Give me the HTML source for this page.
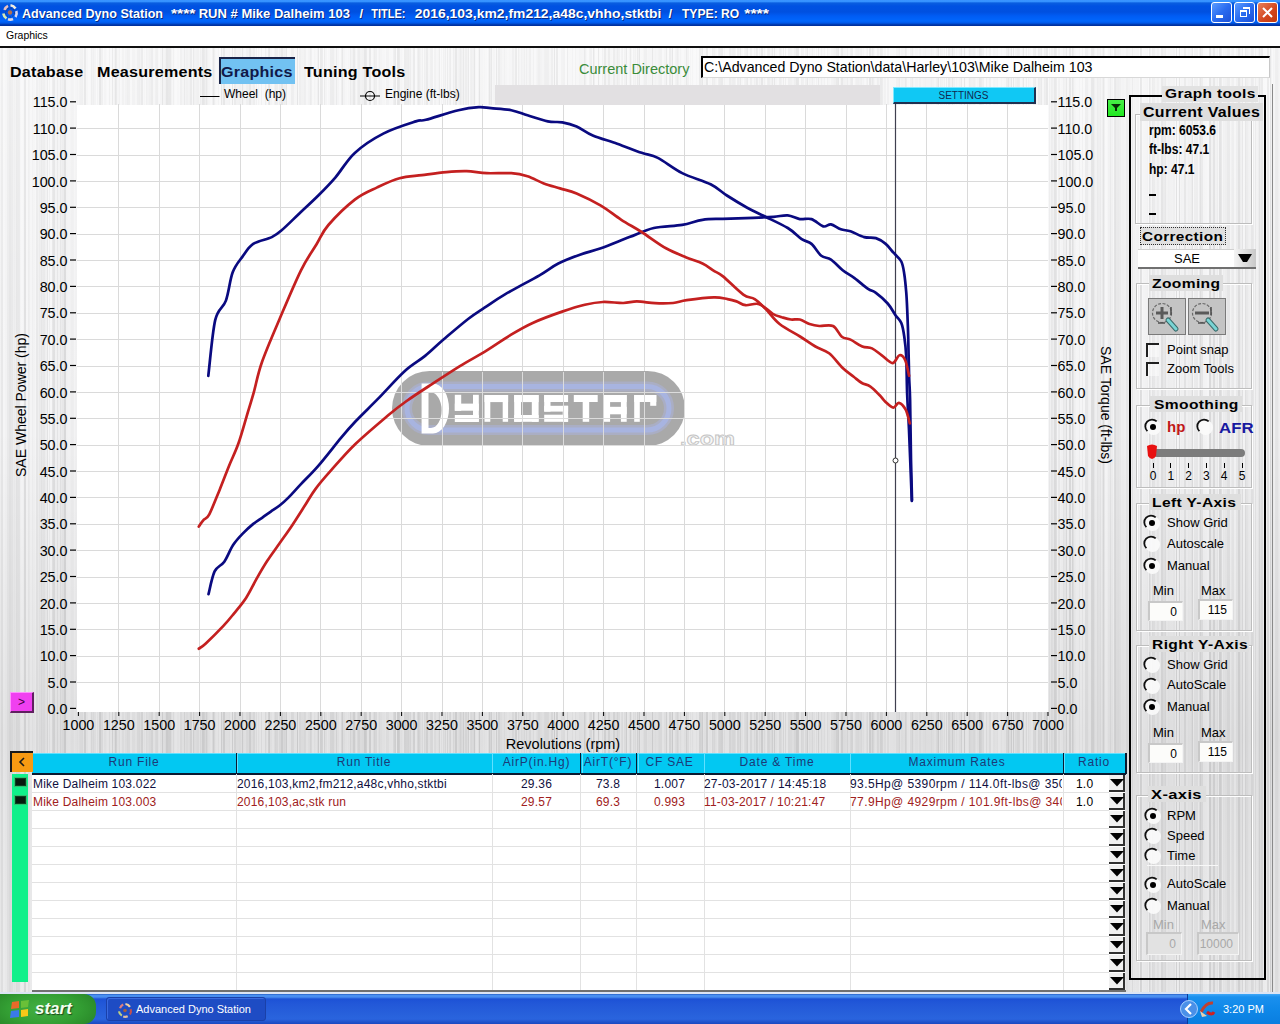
<!DOCTYPE html><html><head><meta charset="utf-8"><style>
*{margin:0;padding:0;box-sizing:border-box}
html,body{width:1280px;height:1024px;overflow:hidden;position:relative;font-family:"Liberation Sans",sans-serif;background:#e6e6e6}
.a{position:absolute;white-space:nowrap}
.metal{background-image:linear-gradient(180deg,rgba(255,255,255,.4) 0,rgba(255,255,255,.25) 120px,rgba(255,255,255,.08) 260px,rgba(0,0,0,0) 380px,rgba(0,0,0,.03) 520px,rgba(0,0,0,.07) 690px,rgba(0,0,0,.06) 760px,rgba(0,0,0,.04) 945px),linear-gradient(90deg,#f1f1f2 0px 1px,#e7e7e8 1px 3px,#f5f5f6 3px 4px,#f5f5f6 4px 5px,#f2f2f3 5px 7px,#eaeaeb 7px 9px,#e4e4e5 9px 11px,#e7e7e8 11px 13px,#eeeeef 13px 14px,#ebebec 14px 15px,#eeeeef 15px 16px,#e4e4e5 16px 17px,#e6e6e7 17px 19px,#e7e7e8 19px 20px,#f3f3f4 20px 21px,#f6f6f7 21px 23px,#f3f3f4 23px 24px,#dfdfe0 24px 26px,#f5f5f6 26px 28px,#ebebec 28px 29px,#eeeeef 29px 30px,#f4f4f5 30px 32px,#eeeeef 32px 33px,#f2f2f3 33px 35px,#f5f5f6 35px 36px,#e8e8e9 36px 38px,#efeff0 38px 39px,#e9e9ea 39px 40px,#ebebec 40px 41px,#e4e4e5 41px 42px,#e9e9ea 42px 43px,#e7e7e8 43px 44px,#e7e7e8 44px 45px,#eeeeef 45px 46px,#f0f0f1 46px 47px,#e3e3e4 47px 48px,#f6f6f7 48px 49px,#ececed 49px 50px,#f6f6f7 50px 52px,#e5e5e6 52px 53px,#dfdfe0 53px 55px,#f0f0f1 55px 56px,#f0f0f1 56px 57px,#e4e4e5 57px 58px,#f0f0f1 58px 60px,#e3e3e4 60px 61px,#ebebec 61px 62px,#e7e7e8 62px 64px,#d8d8d9 64px 66px,#f0f0f1 66px 67px,#f1f1f2 67px 68px,#f2f2f3 68px 70px,#f0f0f1 70px 71px,#ededee 71px 73px,#eeeeef 73px 74px,#f3f3f4 74px 75px,#f0f0f1 75px 77px,#ededee 77px 78px,#f1f1f2 78px 79px,#ececed 79px 80px,#e9e9ea 80px 82px,#e8e8e9 82px 83px,#f1f1f2 83px 84px,#ddddde 84px 86px,#f1f1f2 86px 87px,#f1f1f2 87px 88px,#f6f6f7 88px 90px,#f3f3f4 90px 91px,#e5e5e6 91px 92px,#ececed 92px 93px,#e7e7e8 93px 94px,#ededee 94px 96px,#f6f6f7 96px 97px,#ededee 97px 98px,#f3f3f4 98px 99px,#dbdbdc 99px 100px,#d9d9da 100px 101px,#e8e8e9 101px 103px,#f5f5f6 103px 104px,#efeff0 104px 106px,#f3f3f4 106px 107px,#f6f6f7 107px 108px,#f5f5f6 108px 109px,#e9e9ea 109px 110px,#f4f4f5 110px 112px,#dfdfe0 112px 113px,#f2f2f3 113px 114px,#ececed 114px 115px,#d9d9da 115px 116px,#e0e0e1 116px 117px,#f0f0f1 117px 119px,#eaeaeb 119px 120px,#f5f5f6 120px 121px,#f3f3f4 121px 122px,#ebebec 122px 124px,#f2f2f3 124px 125px,#ececed 125px 127px,#e6e6e7 127px 128px,#e8e8e9 128px 130px,#f4f4f5 130px 132px,#ececed 132px 134px,#ececed 134px 135px,#f1f1f2 135px 137px,#e7e7e8 137px 139px,#e5e5e6 139px 140px,#ececed 140px 141px,#e0e0e1 141px 143px,#f3f3f4 143px 144px,#f0f0f1 144px 145px,#f4f4f5 145px 146px,#e9e9ea 146px 147px,#ededee 147px 149px,#e9e9ea 149px 151px,#e2e2e3 151px 153px,#f1f1f2 153px 154px,#f2f2f3 154px 155px,#e9e9ea 155px 156px,#e6e6e7 156px 158px,#f2f2f3 158px 159px,#f5f5f6 159px 160px,#efeff0 160px 162px,#d9d9da 162px 163px,#ededee 163px 165px,#e9e9ea 165px 166px,#d9d9da 166px 168px,#ddddde 168px 170px,#ddddde 170px 171px,#ebebec 171px 172px,#f2f2f3 172px 173px,#e8e8e9 173px 174px,#f3f3f4 174px 175px,#f6f6f7 175px 177px,#f2f2f3 177px 179px,#f5f5f6 179px 180px,#e8e8e9 180px 182px,#efeff0 182px 184px,#e0e0e1 184px 185px,#ededee 185px 186px,#e9e9ea 186px 188px,#ededee 188px 189px,#ebebec 189px 190px,#e0e0e1 190px 192px,#f2f2f3 192px 193px,#ddddde 193px 194px,#eaeaeb 194px 195px,#ececed 195px 196px,#eaeaeb 196px 197px,#e8e8e9 197px 199px,#f1f1f2 199px 200px,#e6e6e7 200px 201px,#ececed 201px 202px,#dadadb 202px 204px,#dfdfe0 204px 205px,#e7e7e8 205px 206px,#ddddde 206px 207px,#e8e8e9 207px 208px,#efeff0 208px 209px,#f0f0f1 209px 210px,#f3f3f4 210px 211px,#f5f5f6 211px 212px,#e9e9ea 212px 213px,#dadadb 213px 214px,#e6e6e7 214px 215px,#f1f1f2 215px 216px,#f4f4f5 216px 218px,#ededee 218px 219px,#f6f6f7 219px 221px,#dbdbdc 221px 222px,#ededee 222px 223px,#dbdbdc 223px 225px,#efeff0 225px 227px,#efeff0 227px 229px,#ececed 229px 230px,#f4f4f5 230px 232px,#dbdbdc 232px 233px,#f3f3f4 233px 234px,#e1e1e2 234px 236px,#ebebec 236px 237px,#ebebec 237px 239px,#e9e9ea 239px 241px,#eeeeef 241px 242px,#d9d9da 242px 243px,#ededee 243px 244px,#f0f0f1 244px 246px,#e8e8e9 246px 247px,#e7e7e8 247px 248px,#e9e9ea 248px 249px,#dbdbdc 249px 251px,#ececed 251px 253px,#e5e5e6 253px 255px,#f2f2f3 255px 256px,#eaeaeb 256px 257px,#f6f6f7 257px 258px,#eeeeef 258px 259px,#f4f4f5 259px 260px,#f6f6f7 260px 261px,#e9e9ea 261px 262px,#f6f6f7 262px 263px,#f5f5f6 263px 265px,#e6e6e7 265px 266px,#f0f0f1 266px 267px,#f4f4f5 267px 268px,#dededf 268px 269px,#d9d9da 269px 270px,#efeff0 270px 272px,#f4f4f5 272px 274px,#ebebec 274px 275px,#e3e3e4 275px 276px,#e6e6e7 276px 278px,#f1f1f2 278px 279px,#e7e7e8 279px 281px,#dadadb 281px 283px,#e8e8e9 283px 284px,#e5e5e6 284px 285px,#e7e7e8 285px 286px,#dadadb 286px 287px,#f5f5f6 287px 289px,#f3f3f4 289px 291px,#e6e6e7 291px 292px,#e6e6e7 292px 293px,#e7e7e8 293px 294px,#f1f1f2 294px 296px,#f2f2f3 296px 297px,#d8d8d9 297px 298px,#f4f4f5 298px 299px,#e6e6e7 299px 301px,#ebebec 301px 302px,#ebebec 302px 304px,#e6e6e7 304px 305px,#e7e7e8 305px 306px,#f2f2f3 306px 308px,#ededee 308px 309px,#ececed 309px 310px,#e2e2e3 310px 311px,#e7e7e8 311px 312px,#f4f4f5 312px 314px,#eeeeef 314px 315px,#f1f1f2 315px 316px,#f3f3f4 316px 317px,#eaeaeb 317px 318px,#d8d8d9 318px 319px,#f5f5f6 319px 320px,#dededf 320px 321px,#dededf 321px 322px,#e2e2e3 322px 323px,#f6f6f7 323px 324px,#e1e1e2 324px 325px,#efeff0 325px 327px,#f6f6f7 327px 328px,#f2f2f3 328px 329px,#f2f2f3 329px 330px,#e4e4e5 330px 332px,#e3e3e4 332px 334px,#ededee 334px 335px,#f0f0f1 335px 336px,#e0e0e1 336px 337px,#efeff0 337px 339px,#f5f5f6 339px 341px,#e6e6e7 341px 342px,#dadadb 342px 343px,#ededee 343px 345px,#f2f2f3 345px 347px,#f4f4f5 347px 348px,#f0f0f1 348px 349px,#f2f2f3 349px 350px,#e2e2e3 350px 351px,#ececed 351px 352px,#eaeaeb 352px 353px,#dcdcdd 353px 355px,#ececed 355px 356px,#f3f3f4 356px 357px,#e8e8e9 357px 358px,#e2e2e3 358px 360px,#ebebec 360px 362px,#e9e9ea 362px 364px,#d8d8d9 364px 366px,#dededf 366px 367px,#f2f2f3 367px 368px,#f2f2f3 368px 369px,#dbdbdc 369px 371px,#f3f3f4 371px 373px,#ebebec 373px 374px,#e1e1e2 374px 375px,#e6e6e7 375px 377px,#f4f4f5 377px 378px,#efeff0 378px 379px,#e8e8e9 379px 380px,#ededee 380px 382px,#f1f1f2 382px 383px,#f1f1f2 383px 385px,#f4f4f5 385px 386px,#ebebec 386px 387px,#ececed 387px 389px,#f3f3f4 389px 391px,#f3f3f4 391px 392px,#f4f4f5 392px 393px,#e7e7e8 393px 394px,#e1e1e2 394px 395px,#ddddde 395px 396px,#f6f6f7 396px 397px,#d9d9da 397px 399px,#dededf 399px 400px,#f1f1f2 400px 401px,#efeff0 401px 402px,#f3f3f4 402px 403px,#f5f5f6 403px 404px,#e1e1e2 404px 406px,#e3e3e4 406px 408px,#e1e1e2 408px 409px,#e8e8e9 409px 410px,#e3e3e4 410px 411px,#f1f1f2 411px 412px,#f1f1f2 412px 413px,#dfdfe0 413px 415px,#f6f6f7 415px 417px,#e7e7e8 417px 418px,#dededf 418px 419px,#e3e3e4 419px 420px,#ebebec 420px 421px,#f0f0f1 421px 422px,#e9e9ea 422px 423px,#f5f5f6 423px 424px,#e7e7e8 424px 425px,#ebebec 425px 426px,#dfdfe0 426px 428px,#f0f0f1 428px 430px,#e8e8e9 430px 431px,#e6e6e7 431px 432px,#e7e7e8 432px 433px,#f6f6f7 433px 434px,#ebebec 434px 435px,#eaeaeb 435px 436px,#f1f1f2 436px 438px,#eeeeef 438px 439px,#e1e1e2 439px 440px,#f6f6f7 440px 441px,#ededee 441px 442px,#f5f5f6 442px 443px,#e9e9ea 443px 444px,#eeeeef 444px 445px,#e5e5e6 445px 446px,#f4f4f5 446px 447px,#e1e1e2 447px 448px,#f2f2f3 448px 449px,#e7e7e8 449px 450px,#e2e2e3 450px 451px,#f3f3f4 451px 453px,#e5e5e6 453px 454px,#ececed 454px 455px,#dadadb 455px 457px,#efeff0 457px 458px,#ececed 458px 459px,#e8e8e9 459px 460px,#e0e0e1 460px 461px,#e7e7e8 461px 462px,#ebebec 462px 463px,#dcdcdd 463px 464px,#eeeeef 464px 465px,#e4e4e5 465px 467px,#ebebec 467px 468px,#dededf 468px 469px,#f6f6f7 469px 470px,#e9e9ea 470px 471px,#e6e6e7 471px 472px,#eaeaeb 472px 473px,#e8e8e9 473px 474px,#d8d8d9 474px 475px,#f1f1f2 475px 476px,#f6f6f7 476px 478px,#eeeeef 478px 479px,#d8d8d9 479px 480px,#efeff0 480px 482px,#efeff0 482px 483px,#f2f2f3 483px 484px,#f0f0f1 484px 485px,#f3f3f4 485px 487px,#f6f6f7 487px 488px,#ececed 488px 489px,#d9d9da 489px 490px,#e5e5e6 490px 491px,#dbdbdc 491px 492px,#f2f2f3 492px 493px,#eeeeef 493px 495px,#f4f4f5 495px 496px,#dcdcdd 496px 497px,#f1f1f2 497px 498px,#e2e2e3 498px 500px,#ebebec 500px 502px,#f0f0f1 502px 504px,#e9e9ea 504px 505px,#f0f0f1 505px 507px,#f3f3f4 507px 509px,#f0f0f1 509px 510px,#f1f1f2 510px 512px,#e7e7e8 512px 514px,#efeff0 514px 515px,#dfdfe0 515px 516px,#dededf 516px 517px,#f5f5f6 517px 518px,#e5e5e6 518px 519px,#eeeeef 519px 520px,#f1f1f2 520px 521px,#e9e9ea 521px 522px,#ededee 522px 524px,#e6e6e7 524px 525px,#f0f0f1 525px 526px,#e6e6e7 526px 527px,#efeff0 527px 529px,#e6e6e7 529px 531px,#f2f2f3 531px 533px,#e9e9ea 533px 534px,#f4f4f5 534px 536px,#efeff0 536px 537px,#ebebec 537px 538px,#e6e6e7 538px 540px,#ebebec 540px 541px,#ececed 541px 542px,#efeff0 542px 544px,#e8e8e9 544px 545px,#e6e6e7 545px 546px,#e6e6e7 546px 548px,#e7e7e8 548px 549px,#f0f0f1 549px 551px,#e5e5e6 551px 553px,#f2f2f3 553px 554px,#d9d9da 554px 555px,#f4f4f5 555px 556px,#dfdfe0 556px 558px,#f5f5f6 558px 559px,#f4f4f5 559px 561px,#ececed 561px 563px,#eaeaeb 563px 565px,#f6f6f7 565px 567px,#e2e2e3 567px 568px,#f3f3f4 568px 570px,#f3f3f4 570px 572px,#ececed 572px 573px,#f4f4f5 573px 574px,#f5f5f6 574px 575px,#ebebec 575px 576px,#f2f2f3 576px 577px,#f2f2f3 577px 579px,#ededee 579px 580px,#eeeeef 580px 581px,#eeeeef 581px 582px,#efeff0 582px 584px,#ddddde 584px 585px,#e7e7e8 585px 586px,#f1f1f2 586px 587px,#f6f6f7 587px 589px,#ebebec 589px 590px,#e7e7e8 590px 592px,#f4f4f5 592px 593px,#d8d8d9 593px 594px,#e8e8e9 594px 595px,#f6f6f7 595px 597px,#f5f5f6 597px 598px,#dbdbdc 598px 599px,#f3f3f4 599px 600px,#f6f6f7 600px 602px,#eaeaeb 602px 603px,#f1f1f2 603px 604px,#dededf 604px 606px,#f0f0f1 606px 608px,#e1e1e2 608px 610px,#f0f0f1 610px 612px,#f2f2f3 612px 613px,#e1e1e2 613px 615px,#ededee 615px 616px,#ebebec 616px 617px,#e1e1e2 617px 618px,#e9e9ea 618px 620px,#f5f5f6 620px 621px,#ececed 621px 622px,#e9e9ea 622px 623px,#f5f5f6 623px 624px,#ebebec 624px 626px,#dbdbdc 626px 627px,#f6f6f7 627px 628px,#f5f5f6 628px 629px,#eeeeef 629px 630px,#dededf 630px 631px,#eeeeef 631px 632px,#f6f6f7 632px 633px,#eaeaeb 633px 634px,#eeeeef 634px 635px,#e9e9ea 635px 636px,#f3f3f4 636px 637px,#dfdfe0 637px 638px,#eaeaeb 638px 639px,#d9d9da 639px 640px,#f4f4f5 640px 641px,#f3f3f4 641px 643px,#eeeeef 643px 644px,#e7e7e8 644px 646px,#e6e6e7 646px 647px,#f1f1f2 647px 648px,#efeff0 648px 650px,#efeff0 650px 652px,#d9d9da 652px 653px,#efeff0 653px 655px,#ececed 655px 656px,#efeff0 656px 658px,#ebebec 658px 659px,#e8e8e9 659px 660px,#e8e8e9 660px 662px,#f4f4f5 662px 664px,#ededee 664px 666px,#ddddde 666px 667px,#f3f3f4 667px 668px,#f6f6f7 668px 669px,#e2e2e3 669px 671px,#ececed 671px 672px,#d8d8d9 672px 673px,#f5f5f6 673px 674px,#f4f4f5 674px 675px,#ececed 675px 676px,#e9e9ea 676px 677px,#e2e2e3 677px 678px,#e9e9ea 678px 679px,#f2f2f3 679px 680px,#ececed 680px 681px,#f2f2f3 681px 682px,#f4f4f5 682px 684px,#efeff0 684px 686px,#ddddde 686px 687px,#eaeaeb 687px 689px,#f6f6f7 689px 690px,#efeff0 690px 691px,#f5f5f6 691px 692px,#efeff0 692px 693px,#f5f5f6 693px 694px,#f6f6f7 694px 696px,#f1f1f2 696px 697px,#f5f5f6 697px 699px,#e1e1e2 699px 700px,#e1e1e2 700px 701px,#e4e4e5 701px 702px,#dbdbdc 702px 703px,#f2f2f3 703px 704px,#efeff0 704px 706px,#dcdcdd 706px 708px,#f6f6f7 708px 709px,#f3f3f4 709px 711px,#f5f5f6 711px 712px,#e5e5e6 712px 713px,#e9e9ea 713px 714px,#e6e6e7 714px 715px,#eeeeef 715px 716px,#f1f1f2 716px 717px,#f5f5f6 717px 718px,#e7e7e8 718px 719px,#e2e2e3 719px 721px,#dfdfe0 721px 723px,#f2f2f3 723px 724px,#ebebec 724px 725px,#f3f3f4 725px 727px,#f3f3f4 727px 729px,#e3e3e4 729px 730px,#e3e3e4 730px 731px,#eaeaeb 731px 732px,#e6e6e7 732px 733px,#e5e5e6 733px 735px,#ebebec 735px 736px,#f6f6f7 736px 737px,#e5e5e6 737px 739px,#ebebec 739px 740px,#dededf 740px 741px,#f1f1f2 741px 743px,#f6f6f7 743px 744px,#ececed 744px 745px,#e9e9ea 745px 746px,#e5e5e6 746px 747px,#dededf 747px 748px,#f4f4f5 748px 750px,#e6e6e7 750px 752px,#f2f2f3 752px 754px,#e8e8e9 754px 755px,#ededee 755px 756px,#dfdfe0 756px 757px,#e2e2e3 757px 758px,#f2f2f3 758px 759px,#e8e8e9 759px 760px,#eeeeef 760px 761px,#dadadb 761px 763px,#f1f1f2 763px 764px,#e9e9ea 764px 765px,#f2f2f3 765px 766px,#f6f6f7 766px 767px,#e6e6e7 767px 768px,#e3e3e4 768px 769px,#e5e5e6 769px 770px,#ededee 770px 771px,#e9e9ea 771px 772px,#ddddde 772px 773px,#f0f0f1 773px 774px,#dbdbdc 774px 775px,#f0f0f1 775px 777px,#f4f4f5 777px 779px,#e6e6e7 779px 781px,#ebebec 781px 782px,#f3f3f4 782px 783px,#e4e4e5 783px 784px,#f5f5f6 784px 785px,#e6e6e7 785px 786px,#f5f5f6 786px 788px,#e8e8e9 788px 790px,#e9e9ea 790px 792px,#eeeeef 792px 794px,#e6e6e7 794px 795px,#e6e6e7 795px 796px,#d9d9da 796px 798px,#dbdbdc 798px 799px,#f5f5f6 799px 801px,#e6e6e7 801px 802px,#e9e9ea 802px 804px,#f4f4f5 804px 805px,#e9e9ea 805px 807px,#dadadb 807px 808px,#f4f4f5 808px 809px,#ececed 809px 810px,#efeff0 810px 811px,#eeeeef 811px 812px,#e6e6e7 812px 813px,#f0f0f1 813px 814px,#eeeeef 814px 815px,#f5f5f6 815px 816px,#ebebec 816px 817px,#f3f3f4 817px 818px,#dfdfe0 818px 819px,#f2f2f3 819px 821px,#e8e8e9 821px 822px,#f1f1f2 822px 824px,#ebebec 824px 825px,#f4f4f5 825px 826px,#f6f6f7 826px 827px,#e9e9ea 827px 828px,#f1f1f2 828px 830px,#f4f4f5 830px 831px,#ededee 831px 833px,#ebebec 833px 834px,#e8e8e9 834px 836px,#dededf 836px 838px,#dadadb 838px 839px,#f4f4f5 839px 840px,#eeeeef 840px 841px,#dcdcdd 841px 843px,#ebebec 843px 845px,#ececed 845px 846px,#ededee 846px 847px,#e3e3e4 847px 848px,#f0f0f1 848px 850px,#e7e7e8 850px 851px,#e2e2e3 851px 853px,#f5f5f6 853px 854px,#f3f3f4 854px 855px,#ececed 855px 856px,#e8e8e9 856px 858px,#e7e7e8 858px 859px,#ebebec 859px 860px,#eaeaeb 860px 861px,#e7e7e8 861px 862px,#f0f0f1 862px 863px,#ededee 863px 864px,#f3f3f4 864px 865px,#f4f4f5 865px 866px,#ededee 866px 867px,#e6e6e7 867px 868px,#f5f5f6 868px 869px,#dadadb 869px 871px,#e9e9ea 871px 872px,#ddddde 872px 873px,#e5e5e6 873px 874px,#eeeeef 874px 875px,#f3f3f4 875px 876px,#f1f1f2 876px 877px,#e5e5e6 877px 878px,#e6e6e7 878px 879px,#eeeeef 879px 880px,#dfdfe0 880px 882px,#e3e3e4 882px 883px,#f1f1f2 883px 884px,#ebebec 884px 886px,#f5f5f6 886px 887px,#eaeaeb 887px 889px,#f4f4f5 889px 890px,#f2f2f3 890px 891px,#f2f2f3 891px 893px,#f1f1f2 893px 895px,#f2f2f3 895px 896px,#e9e9ea 896px 898px,#e8e8e9 898px 899px,#e2e2e3 899px 900px,#f2f2f3 900px 901px,#ececed 901px 903px,#eeeeef 903px 905px,#dfdfe0 905px 906px,#e6e6e7 906px 907px,#f4f4f5 907px 909px,#f6f6f7 909px 910px,#e9e9ea 910px 912px,#e1e1e2 912px 913px,#eeeeef 913px 914px,#f1f1f2 914px 915px,#ededee 915px 917px,#ededee 917px 918px,#f1f1f2 918px 919px,#eaeaeb 919px 920px,#e9e9ea 920px 921px,#efeff0 921px 923px,#ececed 923px 924px,#ececed 924px 925px,#e9e9ea 925px 926px,#ededee 926px 927px,#ededee 927px 929px,#ededee 929px 931px,#e8e8e9 931px 932px,#ededee 932px 934px,#f1f1f2 934px 936px,#e9e9ea 936px 937px,#e4e4e5 937px 938px,#d8d8d9 938px 939px,#f3f3f4 939px 940px,#e8e8e9 940px 941px,#ececed 941px 943px,#f1f1f2 943px 944px,#eaeaeb 944px 945px,#f5f5f6 945px 946px,#e4e4e5 946px 947px,#f4f4f5 947px 948px,#e1e1e2 948px 950px,#ebebec 950px 951px,#ececed 951px 952px,#dbdbdc 952px 953px,#ebebec 953px 954px,#e9e9ea 954px 955px,#f3f3f4 955px 956px,#ededee 956px 957px,#f2f2f3 957px 959px,#ececed 959px 961px,#dfdfe0 961px 962px,#f4f4f5 962px 964px,#d8d8d9 964px 965px,#f3f3f4 965px 966px,#f5f5f6 966px 968px,#f1f1f2 968px 969px,#e2e2e3 969px 970px,#e7e7e8 970px 971px,#e9e9ea 971px 972px,#eaeaeb 972px 973px,#e7e7e8 973px 974px,#e6e6e7 974px 975px,#ededee 975px 976px,#f3f3f4 976px 977px,#eeeeef 977px 979px,#dcdcdd 979px 980px,#dededf 980px 981px,#e2e2e3 981px 982px,#e9e9ea 982px 983px,#e8e8e9 983px 984px,#f6f6f7 984px 986px,#e8e8e9 986px 987px,#f3f3f4 987px 989px,#e9e9ea 989px 991px,#f6f6f7 991px 993px,#efeff0 993px 995px,#f1f1f2 995px 997px,#eeeeef 997px 998px,#f6f6f7 998px 1000px,#f4f4f5 1000px 1001px,#efeff0 1001px 1002px,#f4f4f5 1002px 1004px,#f2f2f3 1004px 1006px,#e4e4e5 1006px 1008px,#dadadb 1008px 1009px,#ebebec 1009px 1011px,#dadadb 1011px 1012px,#f4f4f5 1012px 1013px,#dbdbdc 1013px 1014px,#f2f2f3 1014px 1015px,#e9e9ea 1015px 1017px,#e4e4e5 1017px 1019px,#e6e6e7 1019px 1020px,#f4f4f5 1020px 1022px,#ededee 1022px 1023px,#dcdcdd 1023px 1024px,#f5f5f6 1024px 1025px,#f2f2f3 1025px 1026px,#e6e6e7 1026px 1027px,#f6f6f7 1027px 1028px,#ebebec 1028px 1029px,#f1f1f2 1029px 1031px,#f5f5f6 1031px 1033px,#e6e6e7 1033px 1035px,#e3e3e4 1035px 1036px,#f2f2f3 1036px 1038px,#e2e2e3 1038px 1039px,#e4e4e5 1039px 1040px,#e6e6e7 1040px 1041px,#dfdfe0 1041px 1042px,#f2f2f3 1042px 1044px,#e4e4e5 1044px 1045px,#e6e6e7 1045px 1046px,#dcdcdd 1046px 1048px,#f6f6f7 1048px 1049px,#e9e9ea 1049px 1050px,#f0f0f1 1050px 1051px,#e6e6e7 1051px 1052px,#e8e8e9 1052px 1053px,#ededee 1053px 1054px,#ddddde 1054px 1055px,#ddddde 1055px 1056px,#e3e3e4 1056px 1057px,#f5f5f6 1057px 1058px,#ebebec 1058px 1059px,#eaeaeb 1059px 1060px,#f4f4f5 1060px 1061px,#f2f2f3 1061px 1063px,#e8e8e9 1063px 1064px,#ececed 1064px 1066px,#ddddde 1066px 1067px,#f2f2f3 1067px 1069px,#dbdbdc 1069px 1071px,#f0f0f1 1071px 1072px,#dadadb 1072px 1073px,#e4e4e5 1073px 1074px,#efeff0 1074px 1075px,#f1f1f2 1075px 1076px,#f4f4f5 1076px 1077px,#f4f4f5 1077px 1079px,#eeeeef 1079px 1080px,#f5f5f6 1080px 1082px,#ececed 1082px 1083px,#f5f5f6 1083px 1085px,#e7e7e8 1085px 1086px,#e7e7e8 1086px 1088px,#f0f0f1 1088px 1089px,#f2f2f3 1089px 1090px,#f1f1f2 1090px 1091px,#ddddde 1091px 1092px,#dcdcdd 1092px 1094px,#e8e8e9 1094px 1095px,#efeff0 1095px 1097px,#e5e5e6 1097px 1098px,#e9e9ea 1098px 1099px,#eaeaeb 1099px 1100px,#e6e6e7 1100px 1101px,#f0f0f1 1101px 1102px,#e8e8e9 1102px 1103px,#dbdbdc 1103px 1104px,#eaeaeb 1104px 1105px,#f6f6f7 1105px 1107px,#f3f3f4 1107px 1108px,#ededee 1108px 1110px,#e4e4e5 1110px 1111px,#eeeeef 1111px 1113px,#f4f4f5 1113px 1114px,#dfdfe0 1114px 1115px,#dcdcdd 1115px 1116px,#e6e6e7 1116px 1118px,#e5e5e6 1118px 1119px,#e8e8e9 1119px 1121px,#eeeeef 1121px 1122px,#ededee 1122px 1124px,#efeff0 1124px 1126px,#e6e6e7 1126px 1128px,#ebebec 1128px 1130px,#efeff0 1130px 1131px,#f0f0f1 1131px 1132px,#e3e3e4 1132px 1133px,#f0f0f1 1133px 1134px,#eeeeef 1134px 1135px,#f0f0f1 1135px 1136px,#efeff0 1136px 1137px,#eeeeef 1137px 1138px,#eeeeef 1138px 1139px,#f6f6f7 1139px 1140px,#dcdcdd 1140px 1141px,#dededf 1141px 1142px,#f5f5f6 1142px 1143px,#f2f2f3 1143px 1145px,#f1f1f2 1145px 1147px,#eeeeef 1147px 1148px,#f6f6f7 1148px 1149px,#ddddde 1149px 1150px,#e8e8e9 1150px 1151px,#f2f2f3 1151px 1152px,#e3e3e4 1152px 1153px,#e6e6e7 1153px 1155px,#efeff0 1155px 1157px,#e9e9ea 1157px 1158px,#eaeaeb 1158px 1159px,#f1f1f2 1159px 1161px,#dededf 1161px 1163px,#e6e6e7 1163px 1165px,#e1e1e2 1165px 1166px,#efeff0 1166px 1168px,#ececed 1168px 1169px,#ededee 1169px 1170px,#eeeeef 1170px 1172px,#efeff0 1172px 1173px,#ececed 1173px 1175px,#f4f4f5 1175px 1176px,#dadadb 1176px 1177px,#f6f6f7 1177px 1178px,#f4f4f5 1178px 1179px,#d9d9da 1179px 1180px,#f2f2f3 1180px 1181px,#efeff0 1181px 1182px,#f0f0f1 1182px 1183px,#f0f0f1 1183px 1184px,#e1e1e2 1184px 1185px,#e1e1e2 1185px 1186px,#f0f0f1 1186px 1188px,#ececed 1188px 1189px,#ededee 1189px 1191px,#e8e8e9 1191px 1192px,#dcdcdd 1192px 1193px,#f5f5f6 1193px 1194px,#eaeaeb 1194px 1196px,#e9e9ea 1196px 1198px,#f4f4f5 1198px 1199px,#e8e8e9 1199px 1200px,#dadadb 1200px 1201px,#e4e4e5 1201px 1203px,#f2f2f3 1203px 1205px,#f3f3f4 1205px 1207px,#f5f5f6 1207px 1208px,#f5f5f6 1208px 1209px,#d9d9da 1209px 1210px,#d8d8d9 1210px 1211px,#ededee 1211px 1213px,#dbdbdc 1213px 1215px,#eeeeef 1215px 1217px,#e8e8e9 1217px 1218px,#f4f4f5 1218px 1219px,#dadadb 1219px 1221px,#e1e1e2 1221px 1222px,#f3f3f4 1222px 1223px,#ebebec 1223px 1224px,#ededee 1224px 1225px,#eaeaeb 1225px 1227px,#e3e3e4 1227px 1229px,#e3e3e4 1229px 1230px,#f2f2f3 1230px 1231px,#ececed 1231px 1232px,#e8e8e9 1232px 1234px,#f3f3f4 1234px 1236px,#e9e9ea 1236px 1238px,#d9d9da 1238px 1240px,#e9e9ea 1240px 1241px,#ececed 1241px 1242px,#dfdfe0 1242px 1243px,#f3f3f4 1243px 1245px,#dededf 1245px 1246px,#e6e6e7 1246px 1247px,#e7e7e8 1247px 1248px,#ececed 1248px 1249px,#eeeeef 1249px 1251px,#e2e2e3 1251px 1253px,#e5e5e6 1253px 1254px,#f2f2f3 1254px 1255px,#e4e4e5 1255px 1256px,#efeff0 1256px 1258px,#e9e9ea 1258px 1259px,#dbdbdc 1259px 1260px,#e7e7e8 1260px 1261px,#e0e0e1 1261px 1263px,#f5f5f6 1263px 1265px,#f6f6f7 1265px 1267px,#e1e1e2 1267px 1269px,#f6f6f7 1269px 1270px,#d8d8d9 1270px 1271px,#ececed 1271px 1272px,#f5f5f6 1272px 1273px,#eeeeef 1273px 1274px,#f1f1f2 1274px 1275px,#e6e6e7 1275px 1276px,#e5e5e6 1276px 1278px,#ebebec 1278px 1279px,#efeff0 1279px 1280px)}
.b{font-weight:bold}
</style></head><body><div class="a" style="left:0;top:0;width:1280px;height:26px;background:linear-gradient(#3a94ff 0,#3592ff 1.5px,#0a5ee0 3px,#0052e2 6px,#0050e0 12px,#005cf4 16px,#0066fc 21px,#0058e8 23px,#0032a0 25px,#0030a0 26px)"></div>
<svg class="a" style="left:0px;top:2px" width="20" height="20" viewBox="0 0 20 20"><g fill="none" stroke-width="2.6"><path d="M4.5,8 A7,7 0 0 1 8,3.8" stroke="#e8c0c0"/><path d="M10.5,3.3 A7,7 0 0 1 15.5,6.5" stroke="#f0ece0"/><path d="M16.3,9 A7,7 0 0 1 15.5,15" stroke="#d8d8f0"/><path d="M13,17 A7,7 0 0 1 8,17.3" stroke="#e0d8e0"/><path d="M6.5,16.3 A7,7 0 0 1 3.3,11.5" stroke="#d8e8b0"/></g><circle cx="10" cy="10.5" r="2.2" fill="#b07050"/><circle cx="10" cy="10.5" r="4.5" fill="none" stroke="#1a3a80" stroke-width="1" stroke-dasharray="1.5 1.5"/></svg>
<svg class="a" style="left:0;top:0" width="800" height="26"><text x="23" y="19" font-family="Liberation Sans" font-weight="bold" font-size="13" fill="#0a2a80" textLength="141.0" lengthAdjust="spacingAndGlyphs">Advanced Dyno Station</text><text x="22" y="18" font-family="Liberation Sans" font-weight="bold" font-size="13" fill="#fff" textLength="141.0" lengthAdjust="spacingAndGlyphs">Advanced Dyno Station</text><text x="172" y="19" font-family="Liberation Sans" font-weight="bold" font-size="13" fill="#0a2a80" textLength="24.5" lengthAdjust="spacingAndGlyphs">****</text><text x="171" y="18" font-family="Liberation Sans" font-weight="bold" font-size="13" fill="#fff" textLength="24.5" lengthAdjust="spacingAndGlyphs">****</text><text x="199.7" y="19" font-family="Liberation Sans" font-weight="bold" font-size="13" fill="#0a2a80" textLength="151.3" lengthAdjust="spacingAndGlyphs">RUN # Mike Dalheim 103</text><text x="198.7" y="18" font-family="Liberation Sans" font-weight="bold" font-size="13" fill="#fff" textLength="151.3" lengthAdjust="spacingAndGlyphs">RUN # Mike Dalheim 103</text><text x="360.6" y="19" font-family="Liberation Sans" font-weight="bold" font-size="13" fill="#0a2a80">/</text><text x="359.6" y="18" font-family="Liberation Sans" font-weight="bold" font-size="13" fill="#fff">/</text><text x="372.3" y="19" font-family="Liberation Sans" font-weight="bold" font-size="13" fill="#0a2a80" textLength="34.2" lengthAdjust="spacingAndGlyphs">TITLE:</text><text x="371.3" y="18" font-family="Liberation Sans" font-weight="bold" font-size="13" fill="#fff" textLength="34.2" lengthAdjust="spacingAndGlyphs">TITLE:</text><text x="415.8" y="19" font-family="Liberation Sans" font-weight="bold" font-size="13" fill="#0a2a80" textLength="246.7" lengthAdjust="spacingAndGlyphs">2016,103,km2,fm212,a48c,vhho,stktbi</text><text x="414.8" y="18" font-family="Liberation Sans" font-weight="bold" font-size="13" fill="#fff" textLength="246.7" lengthAdjust="spacingAndGlyphs">2016,103,km2,fm212,a48c,vhho,stktbi</text><text x="669.5" y="19" font-family="Liberation Sans" font-weight="bold" font-size="13" fill="#0a2a80">/</text><text x="668.5" y="18" font-family="Liberation Sans" font-weight="bold" font-size="13" fill="#fff">/</text><text x="682.9" y="19" font-family="Liberation Sans" font-weight="bold" font-size="13" fill="#0a2a80" textLength="57.4" lengthAdjust="spacingAndGlyphs">TYPE: RO</text><text x="681.9" y="18" font-family="Liberation Sans" font-weight="bold" font-size="13" fill="#fff" textLength="57.4" lengthAdjust="spacingAndGlyphs">TYPE: RO</text><text x="745.2" y="19" font-family="Liberation Sans" font-weight="bold" font-size="13" fill="#0a2a80" textLength="24.8" lengthAdjust="spacingAndGlyphs">****</text><text x="744.2" y="18" font-family="Liberation Sans" font-weight="bold" font-size="13" fill="#fff" textLength="24.8" lengthAdjust="spacingAndGlyphs">****</text></svg>
<div class="a" style="left:1211px;top:2px;width:21px;height:21px;border:1px solid #fff;border-radius:3px;background:linear-gradient(135deg,#5c9cff,#2a6cf0 50%,#1c50d8)"></div>
<div class="a" style="left:1234px;top:2px;width:21px;height:21px;border:1px solid #fff;border-radius:3px;background:linear-gradient(135deg,#5c9cff,#2a6cf0 50%,#1c50d8)"></div>
<div class="a" style="left:1257px;top:2px;width:21px;height:21px;border:1px solid #fff;border-radius:3px;background:linear-gradient(135deg,#e8805a,#d2451c 60%,#c03a10)"></div>
<div class="a" style="left:1216px;top:15px;width:7px;height:3px;background:#fff"></div>
<div class="a" style="left:1240px;top:10px;width:7px;height:7px;border:1px solid #fff;border-top-width:2px"></div><div class="a" style="left:1243px;top:7px;width:7px;height:7px;border:1px solid #fff;border-top-width:2px;border-left:none;border-bottom:none"></div>
<svg class="a" style="left:1262px;top:7px" width="11" height="11"><path d="M1,1 L10,10 M10,1 L1,10" stroke="#fff" stroke-width="2"/></svg>
<div class="a" style="left:0;top:26px;width:1280px;height:21px;background:#fff"></div>
<div class="a" style="left:6px;top:28px;font-size:11px;line-height:14px;color:#000;transform-origin:0 0;transform:scaleX(0.95)">Graphics</div>
<div class="a" style="left:0;top:46px;width:1280px;height:2px;background:#101010"></div>
<div class="a metal" style="left:0;top:48px;width:1280px;height:945px"></div>
<div class="a" style="left:10px;top:64px;font-size:14px;line-height:16px;font-weight:bold;letter-spacing:0.2px;color:#000;transform-origin:0 0;transform:scaleX(1.15)">Database</div>
<div class="a" style="left:97px;top:64px;font-size:14px;line-height:16px;font-weight:bold;letter-spacing:0.2px;color:#000;transform-origin:0 0;transform:scaleX(1.15)">Measurements</div>
<div class="a" style="left:219px;top:57px;width:76px;height:27px;background:#72c2f2;border-top:2px solid #1a2448;border-left:2px solid #1a2448"></div>
<div class="a" style="left:221px;top:64px;font-size:14px;line-height:16px;font-weight:bold;letter-spacing:0.2px;color:#000;transform-origin:0 0;transform:scaleX(1.15);color:#101848">Graphics</div>
<div class="a" style="left:304px;top:64px;font-size:14px;line-height:16px;font-weight:bold;letter-spacing:0.2px;color:#000;transform-origin:0 0;transform:scaleX(1.15)">Tuning Tools</div>
<div class="a" style="left:579px;top:61px;font-size:14.5px;line-height:16px;color:#3a8c3a">Current Directory</div>
<div class="a" style="left:701px;top:56px;width:569px;height:22px;background:#fff;border-top:2px solid #000;border-left:2px solid #000;border-right:1px solid #c8c8c8;border-bottom:1px solid #d8d8d8"></div>
<div class="a" style="left:704px;top:59px;font-size:15px;transform-origin:0 0;transform:scaleX(0.947);line-height:16px;color:#000">C:\Advanced Dyno Station\data\Harley\103\Mike Dalheim 103</div>
<svg class="a" style="left:0;top:0" width="1280" height="1024" viewBox="0 0 1280 1024"><rect x="77" y="105" width="971" height="607" fill="#fff"/><line x1="118.5" y1="104" x2="118.5" y2="712" stroke="#dadada" stroke-width="1"/><line x1="159.5" y1="104" x2="159.5" y2="712" stroke="#dadada" stroke-width="1"/><line x1="199.5" y1="104" x2="199.5" y2="712" stroke="#dadada" stroke-width="1"/><line x1="240.5" y1="104" x2="240.5" y2="712" stroke="#dadada" stroke-width="1"/><line x1="280.5" y1="104" x2="280.5" y2="712" stroke="#dadada" stroke-width="1"/><line x1="320.5" y1="104" x2="320.5" y2="712" stroke="#dadada" stroke-width="1"/><line x1="361.5" y1="104" x2="361.5" y2="712" stroke="#dadada" stroke-width="1"/><line x1="401.5" y1="104" x2="401.5" y2="712" stroke="#dadada" stroke-width="1"/><line x1="442.5" y1="104" x2="442.5" y2="712" stroke="#dadada" stroke-width="1"/><line x1="482.5" y1="104" x2="482.5" y2="712" stroke="#dadada" stroke-width="1"/><line x1="522.5" y1="104" x2="522.5" y2="712" stroke="#dadada" stroke-width="1"/><line x1="563.5" y1="104" x2="563.5" y2="712" stroke="#dadada" stroke-width="1"/><line x1="603.5" y1="104" x2="603.5" y2="712" stroke="#dadada" stroke-width="1"/><line x1="644.5" y1="104" x2="644.5" y2="712" stroke="#dadada" stroke-width="1"/><line x1="684.5" y1="104" x2="684.5" y2="712" stroke="#dadada" stroke-width="1"/><line x1="724.5" y1="104" x2="724.5" y2="712" stroke="#dadada" stroke-width="1"/><line x1="765.5" y1="104" x2="765.5" y2="712" stroke="#dadada" stroke-width="1"/><line x1="805.5" y1="104" x2="805.5" y2="712" stroke="#dadada" stroke-width="1"/><line x1="846.5" y1="104" x2="846.5" y2="712" stroke="#dadada" stroke-width="1"/><line x1="886.5" y1="104" x2="886.5" y2="712" stroke="#dadada" stroke-width="1"/><line x1="926.5" y1="104" x2="926.5" y2="712" stroke="#dadada" stroke-width="1"/><line x1="967.5" y1="104" x2="967.5" y2="712" stroke="#dadada" stroke-width="1"/><line x1="1007.5" y1="104" x2="1007.5" y2="712" stroke="#dadada" stroke-width="1"/><line x1="77" y1="682.5" x2="1048" y2="682.5" stroke="#dadada" stroke-width="1"/><line x1="77" y1="656.5" x2="1048" y2="656.5" stroke="#dadada" stroke-width="1"/><line x1="77" y1="629.5" x2="1048" y2="629.5" stroke="#dadada" stroke-width="1"/><line x1="77" y1="603.5" x2="1048" y2="603.5" stroke="#dadada" stroke-width="1"/><line x1="77" y1="577.5" x2="1048" y2="577.5" stroke="#dadada" stroke-width="1"/><line x1="77" y1="550.5" x2="1048" y2="550.5" stroke="#dadada" stroke-width="1"/><line x1="77" y1="524.5" x2="1048" y2="524.5" stroke="#dadada" stroke-width="1"/><line x1="77" y1="497.5" x2="1048" y2="497.5" stroke="#dadada" stroke-width="1"/><line x1="77" y1="471.5" x2="1048" y2="471.5" stroke="#dadada" stroke-width="1"/><line x1="77" y1="445.5" x2="1048" y2="445.5" stroke="#dadada" stroke-width="1"/><line x1="77" y1="418.5" x2="1048" y2="418.5" stroke="#dadada" stroke-width="1"/><line x1="77" y1="392.5" x2="1048" y2="392.5" stroke="#dadada" stroke-width="1"/><line x1="77" y1="366.5" x2="1048" y2="366.5" stroke="#dadada" stroke-width="1"/><line x1="77" y1="339.5" x2="1048" y2="339.5" stroke="#dadada" stroke-width="1"/><line x1="77" y1="313.5" x2="1048" y2="313.5" stroke="#dadada" stroke-width="1"/><line x1="77" y1="286.5" x2="1048" y2="286.5" stroke="#dadada" stroke-width="1"/><line x1="77" y1="260.5" x2="1048" y2="260.5" stroke="#dadada" stroke-width="1"/><line x1="77" y1="234.5" x2="1048" y2="234.5" stroke="#dadada" stroke-width="1"/><line x1="77" y1="207.5" x2="1048" y2="207.5" stroke="#dadada" stroke-width="1"/><line x1="77" y1="181.5" x2="1048" y2="181.5" stroke="#dadada" stroke-width="1"/><line x1="77" y1="155.5" x2="1048" y2="155.5" stroke="#dadada" stroke-width="1"/><line x1="77" y1="128.5" x2="1048" y2="128.5" stroke="#dadada" stroke-width="1"/><rect x="495" y="85" width="385" height="20" fill="#e2e0e2"/><rect x="392" y="371" width="293" height="75" rx="37.5" fill="#a9a9a9"/><rect x="407" y="386.5" width="262" height="43.5" rx="21.75" fill="none" stroke="#aaaec4" stroke-width="10"/><rect x="407" y="386.5" width="262" height="43.5" rx="21.75" fill="none" stroke="#a8b4e0" stroke-width="5"/><path d="M421.6,383.5 H433 A16,25 0 0 1 433,433.5 H421.6 Z M428.5,392.6 H431 A10.6,17.65 0 0 1 431,427.9 H428.5 Z" fill="#fff" fill-rule="evenodd"/><rect x="454.8" y="394.8" width="6.4" height="16" fill="#fff"/><rect x="473" y="394.8" width="5.8" height="27" fill="#fff"/><rect x="454.8" y="403.6" width="24" height="7.1" fill="#fff"/><rect x="454.8" y="415" width="24" height="7" fill="#fff"/><rect x="484.5" y="395" width="23.6" height="7.1" fill="#fff"/><rect x="484.5" y="395" width="5.8" height="26.8" fill="#fff"/><rect x="502.7" y="395" width="5.4" height="26.8" fill="#fff"/><rect x="514.2" y="395" width="24.4" height="7.1" fill="#fff"/><rect x="514.2" y="415" width="24.4" height="6.8" fill="#fff"/><rect x="514.2" y="395" width="6.8" height="26.8" fill="#fff"/><rect x="531.8" y="395" width="6.8" height="26.8" fill="#fff"/><rect x="544.2" y="395" width="23.9" height="7" fill="#fff"/><rect x="544.2" y="395" width="6.3" height="16.6" fill="#fff"/><rect x="544.2" y="405.8" width="23.9" height="5.8" fill="#fff"/><rect x="562.7" y="405.8" width="5.4" height="16" fill="#fff"/><rect x="544.2" y="414.7" width="23.9" height="7.1" fill="#fff"/><rect x="573.8" y="395" width="23.9" height="7" fill="#fff"/><rect x="582.7" y="395" width="6.5" height="26.8" fill="#fff"/><rect x="603.8" y="395" width="6.3" height="26.8" fill="#fff"/><rect x="620.9" y="395" width="5.8" height="26.8" fill="#fff"/><rect x="603.8" y="395" width="22.9" height="7.1" fill="#fff"/><rect x="603.8" y="406.8" width="22.9" height="7.5" fill="#fff"/><rect x="634.2" y="395" width="22.1" height="7" fill="#fff"/><rect x="634.2" y="395" width="5.6" height="26.8" fill="#fff"/><rect x="650.2" y="395" width="6.1" height="10.8" fill="#fff"/><text x="680" y="445" font-family="Liberation Sans" font-weight="bold" font-size="18" fill="#f6f6f6" stroke="#c4c4c4" stroke-width="0.8" textLength="55" lengthAdjust="spacingAndGlyphs">.com</text><line x1="401.5" y1="372" x2="401.5" y2="446" stroke="#dcdcdc" stroke-width="1"/><line x1="442.5" y1="372" x2="442.5" y2="446" stroke="#dcdcdc" stroke-width="1"/><line x1="482.5" y1="372" x2="482.5" y2="446" stroke="#dcdcdc" stroke-width="1"/><line x1="522.5" y1="372" x2="522.5" y2="446" stroke="#dcdcdc" stroke-width="1"/><line x1="563.5" y1="372" x2="563.5" y2="446" stroke="#dcdcdc" stroke-width="1"/><line x1="603.5" y1="372" x2="603.5" y2="446" stroke="#dcdcdc" stroke-width="1"/><line x1="644.5" y1="372" x2="644.5" y2="446" stroke="#dcdcdc" stroke-width="1"/><line x1="684.5" y1="372" x2="684.5" y2="446" stroke="#dcdcdc" stroke-width="1"/><line x1="724.5" y1="372" x2="724.5" y2="446" stroke="#dcdcdc" stroke-width="1"/><line x1="393" y1="445.5" x2="740" y2="445.5" stroke="#dcdcdc" stroke-width="1"/><line x1="393" y1="418.5" x2="740" y2="418.5" stroke="#dcdcdc" stroke-width="1"/><line x1="393" y1="392.5" x2="740" y2="392.5" stroke="#dcdcdc" stroke-width="1"/><line x1="895.5" y1="103" x2="895.5" y2="712" stroke="#404050" stroke-width="1.2"/><circle cx="895.5" cy="460.5" r="2.5" fill="#fff" stroke="#303030" stroke-width="1"/><path d="M208.5,594.2 C209.5,590.4 212.0,576.8 214.6,571.4 C217.2,566.0 221.2,566.1 224.3,561.7 C227.4,557.3 230.0,549.7 233.1,545.0 C236.2,540.3 239.3,537.1 242.7,533.6 C246.1,530.1 250.1,526.5 253.3,523.9 C256.5,521.3 259.2,519.8 262.1,517.8 C265.0,515.8 267.9,513.6 270.8,511.6 C273.7,509.6 276.7,507.8 279.6,505.5 C282.5,503.2 284.9,501.1 288.4,497.6 C291.9,494.1 295.7,489.7 300.7,484.4 C305.7,479.1 311.8,473.4 318.5,465.6 C325.2,457.9 334.9,445.2 341.0,437.9 C347.1,430.5 349.2,428.0 355.4,421.5 C361.5,415.0 369.7,407.3 377.9,398.9 C386.1,390.5 396.7,378.4 404.6,371.2 C412.5,364.0 418.6,361.2 425.1,355.9 C431.6,350.6 436.3,345.6 443.5,339.5 C450.7,333.4 461.3,324.3 468.1,319.0 C474.9,313.7 478.4,311.8 484.5,307.7 C490.6,303.6 495.8,299.8 505.0,294.4 C514.2,289.0 530.6,280.4 539.5,275.3 C548.4,270.2 551.4,267.0 558.3,263.5 C565.1,260.0 573.5,256.9 580.6,254.4 C587.7,251.9 592.8,251.2 600.9,248.3 C609.0,245.4 620.6,240.5 629.4,237.1 C638.2,233.7 645.0,230.0 653.8,228.0 C662.6,226.0 674.1,226.3 682.2,224.9 C690.3,223.5 695.7,220.8 702.5,219.8 C709.3,218.8 714.3,219.1 722.8,218.8 C731.3,218.5 744.8,218.1 753.3,217.8 C761.8,217.5 767.9,217.2 773.6,216.8 C779.4,216.4 783.4,215.0 787.8,215.4 C792.2,215.8 795.8,218.5 799.8,219.1 C803.8,219.7 807.6,217.9 811.5,219.1 C815.4,220.3 820.0,225.5 823.2,226.4 C826.5,227.3 828.1,223.9 831.0,224.4 C833.9,224.9 837.5,228.2 840.8,229.3 C844.0,230.5 846.6,230.0 850.5,231.3 C854.4,232.6 860.0,236.0 864.2,237.1 C868.4,238.2 872.3,237.0 875.9,238.1 C879.5,239.2 882.8,241.5 885.7,243.9 C888.6,246.3 890.9,249.8 893.5,252.7 C896.1,255.6 899.5,257.9 901.3,261.5 C903.1,265.1 903.5,269.1 904.3,274.2 C905.1,279.2 905.7,285.9 906.2,291.8 C906.7,297.7 906.9,301.9 907.2,309.4 C907.5,316.9 907.9,325.6 908.2,336.7 C908.5,347.8 908.8,365.2 909.1,375.8 C909.4,386.4 909.8,386.0 910.1,400.0 C910.4,414.0 910.7,443.3 911.0,460.0 C911.3,476.7 911.8,493.3 912.0,500.0" fill="none" stroke="#0a0a80" stroke-width="2.7" stroke-linejoin="round" stroke-linecap="round"/><path d="M208.3,375.8 C209.5,366.5 212.3,332.6 215.2,320.1 C218.1,307.6 223.0,308.6 225.9,300.6 C228.8,292.6 229.9,279.6 232.7,272.3 C235.5,265.0 239.1,261.3 242.5,256.6 C245.9,251.9 248.3,247.2 253.2,243.9 C258.1,240.7 267.1,239.4 271.8,237.1 C276.5,234.8 277.1,234.2 281.6,230.3 C286.2,226.4 293.0,219.5 299.1,213.7 C305.2,207.9 312.2,201.6 318.3,195.5 C324.4,189.4 329.4,184.4 335.5,177.3 C341.6,170.2 346.8,160.2 354.8,152.9 C362.8,145.6 373.1,138.8 383.3,133.6 C393.5,128.3 408.7,123.7 415.8,121.4 C422.9,119.1 418.8,121.7 425.9,119.8 C433.0,117.9 449.6,112.3 458.4,110.2 C467.2,108.1 473.4,107.5 478.8,107.2 C484.2,106.9 485.6,107.7 491.0,108.2 C496.4,108.7 505.2,109.0 511.3,110.2 C517.4,111.4 521.4,113.4 527.5,115.3 C533.6,117.2 542.0,120.2 547.8,121.4 C553.6,122.6 557.5,121.5 562.3,122.3 C567.1,123.1 571.5,124.2 576.6,126.4 C581.7,128.6 586.0,132.6 592.8,135.5 C599.6,138.4 609.1,140.8 617.2,143.7 C625.3,146.6 634.8,150.4 641.6,152.8 C648.4,155.2 651.0,154.5 657.8,157.9 C664.6,161.3 673.4,168.7 682.2,173.1 C691.0,177.5 703.2,180.6 710.6,184.3 C718.0,188.0 720.8,191.6 726.9,195.5 C733.0,199.4 741.1,204.3 747.2,207.7 C753.3,211.1 756.6,212.4 763.4,215.8 C770.2,219.2 781.4,224.1 787.8,228.0 C794.2,231.9 797.8,236.4 801.7,239.1 C805.7,241.8 808.2,241.1 811.5,243.9 C814.8,246.7 818.0,253.1 821.3,255.7 C824.5,258.3 827.4,257.2 831.0,259.6 C834.6,262.0 838.8,267.2 842.7,270.3 C846.6,273.4 850.3,275.0 854.5,278.1 C858.7,281.2 864.5,286.4 868.1,288.9 C871.7,291.3 872.6,290.4 875.9,292.8 C879.2,295.2 884.4,299.8 887.7,303.5 C891.0,307.2 893.2,311.9 895.5,315.2 C897.8,318.4 899.8,319.4 901.3,323.0 C902.8,326.6 903.5,331.1 904.3,336.7 C905.1,342.2 905.7,346.5 906.2,356.3 C906.7,366.1 906.7,383.0 907.2,395.3 C907.7,407.6 908.2,412.4 909.0,430.0 C909.8,447.6 911.3,489.2 911.8,501.0" fill="none" stroke="#0a0a80" stroke-width="2.7" stroke-linejoin="round" stroke-linecap="round"/><path d="M198.8,648.7 C200.0,647.8 201.7,647.2 205.8,643.4 C209.9,639.6 218.7,630.9 223.4,625.9 C228.1,620.9 230.1,618.3 233.9,613.6 C237.7,608.9 242.4,603.6 246.2,597.7 C250.0,591.8 253.3,584.5 256.8,578.4 C260.3,572.2 263.5,566.6 267.3,560.8 C271.1,554.9 275.5,549.1 279.6,543.3 C283.7,537.4 287.5,532.3 291.9,525.7 C296.3,519.1 302.1,509.8 306.0,503.7 C309.9,497.6 311.3,494.6 315.4,489.1 C319.5,483.6 324.1,478.2 330.8,470.7 C337.5,463.2 345.8,453.2 355.4,444.0 C365.0,434.8 379.7,422.5 388.2,415.3 C396.7,408.1 399.4,406.1 406.6,401.0 C413.8,395.9 422.3,390.4 431.2,384.6 C440.1,378.8 451.0,371.6 459.9,366.1 C468.8,360.6 476.1,356.9 484.5,351.8 C492.9,346.7 502.0,340.1 510.0,335.3 C518.0,330.5 524.0,326.8 532.7,322.9 C541.4,318.9 553.4,314.6 562.1,311.6 C570.8,308.6 578.0,306.4 584.8,304.8 C591.6,303.2 596.5,302.3 602.9,302.0 C609.3,301.7 617.6,303.1 623.3,303.0 C629.0,302.9 631.6,301.4 636.9,301.4 C642.2,301.4 649.0,302.9 655.0,303.2 C661.0,303.5 667.8,303.5 673.1,303.0 C678.4,302.5 679.9,301.1 686.7,300.2 C693.5,299.2 707.1,297.5 713.9,297.3 C720.7,297.1 723.7,298.4 727.5,299.1 C731.3,299.8 733.5,300.4 736.5,301.4 C739.5,302.4 741.8,304.8 745.6,305.2 C749.4,305.6 754.7,302.7 759.2,304.1 C763.7,305.5 769.0,311.6 772.8,313.8 C776.6,316.0 778.9,316.2 781.9,317.2 C784.9,318.1 787.9,319.1 790.9,319.5 C793.9,319.9 796.7,318.8 799.8,319.5 C802.9,320.2 806.2,322.9 809.5,324.0 C812.8,325.1 815.4,325.7 819.3,326.0 C823.2,326.3 829.2,324.2 833.0,326.0 C836.8,327.8 838.9,334.4 841.8,336.7 C844.7,339.0 847.1,338.0 850.5,339.6 C853.9,341.2 858.7,345.0 862.3,346.5 C865.9,348.0 868.8,346.9 872.0,348.4 C875.2,349.9 878.4,352.9 881.8,355.3 C885.2,357.8 889.6,363.1 892.5,363.1 C895.4,363.1 897.3,355.8 899.4,355.3 C901.5,354.8 903.6,356.8 905.2,360.2 C906.8,363.6 908.5,373.2 909.1,375.8" fill="none" stroke="#c42020" stroke-width="2.7" stroke-linejoin="round" stroke-linecap="round"/><path d="M198.8,526.6 C199.5,525.6 201.4,522.5 203.2,520.4 C204.9,518.3 206.6,519.4 209.3,514.3 C212.0,509.2 216.3,497.9 219.6,489.9 C222.9,481.8 225.9,473.7 229.0,466.0 C232.1,458.3 235.4,452.0 238.3,443.8 C241.2,435.6 244.0,425.2 246.5,416.8 C249.0,408.4 250.9,402.5 253.5,393.4 C256.1,384.3 257.6,374.4 262.0,362.0 C266.4,349.6 273.1,334.3 279.6,319.0 C286.1,303.7 294.8,282.8 301.0,270.3 C307.2,257.8 312.1,251.6 316.7,244.0 C321.3,236.4 322.0,232.4 328.4,225.0 C334.8,217.6 346.7,205.9 354.8,199.6 C362.9,193.3 369.8,190.9 377.2,187.4 C384.6,183.9 392.1,180.3 399.5,178.3 C406.9,176.3 414.1,176.2 421.9,175.2 C429.7,174.2 438.9,172.9 446.3,172.2 C453.8,171.5 459.8,171.0 466.6,171.2 C473.4,171.4 479.4,172.9 486.9,173.2 C494.3,173.5 504.5,172.7 511.3,173.2 C518.1,173.7 522.1,174.6 527.5,176.3 C532.9,178.0 538.4,181.4 543.8,183.4 C549.2,185.4 554.5,186.7 560.0,188.4 C565.5,190.1 569.8,190.5 576.6,193.4 C583.4,196.3 593.5,201.2 600.9,205.6 C608.3,210.0 614.5,215.4 621.3,219.8 C628.1,224.2 634.1,227.2 641.6,232.0 C649.1,236.8 658.5,244.1 666.0,248.3 C673.5,252.5 680.2,254.9 686.3,257.4 C692.4,259.9 697.9,261.3 702.5,263.5 C707.1,265.7 710.5,268.7 713.9,270.8 C717.3,272.9 718.1,272.4 723.0,276.4 C727.9,280.4 738.0,290.8 743.3,294.6 C748.6,298.4 750.9,296.7 754.7,299.1 C758.5,301.6 761.9,305.2 766.0,309.3 C770.1,313.4 773.9,319.5 779.6,324.0 C785.3,328.5 794.0,332.8 800.0,336.5 C806.0,340.2 810.5,343.7 815.4,346.5 C820.2,349.3 824.5,349.7 829.1,353.3 C833.7,356.9 838.6,364.1 842.7,368.0 C846.8,371.9 850.5,374.3 853.7,376.8 C856.9,379.3 859.2,381.4 861.9,383.0 C864.6,384.6 867.1,384.3 870.1,386.4 C873.1,388.4 877.2,392.8 879.7,395.3 C882.2,397.8 882.8,399.4 885.1,401.5 C887.4,403.6 891.1,407.4 893.4,407.6 C895.7,407.8 896.8,402.5 898.8,402.8 C900.8,403.1 903.9,406.3 905.7,409.7 C907.5,413.1 909.1,421.1 909.8,423.4" fill="none" stroke="#c42020" stroke-width="2.7" stroke-linejoin="round" stroke-linecap="round"/><line x1="78.4" y1="712" x2="78.4" y2="716" stroke="#000" stroke-width="1"/><line x1="118.8" y1="712" x2="118.8" y2="716" stroke="#000" stroke-width="1"/><line x1="159.2" y1="712" x2="159.2" y2="716" stroke="#000" stroke-width="1"/><line x1="199.6" y1="712" x2="199.6" y2="716" stroke="#000" stroke-width="1"/><line x1="240.0" y1="712" x2="240.0" y2="716" stroke="#000" stroke-width="1"/><line x1="280.4" y1="712" x2="280.4" y2="716" stroke="#000" stroke-width="1"/><line x1="320.8" y1="712" x2="320.8" y2="716" stroke="#000" stroke-width="1"/><line x1="361.2" y1="712" x2="361.2" y2="716" stroke="#000" stroke-width="1"/><line x1="401.6" y1="712" x2="401.6" y2="716" stroke="#000" stroke-width="1"/><line x1="442.0" y1="712" x2="442.0" y2="716" stroke="#000" stroke-width="1"/><line x1="482.4" y1="712" x2="482.4" y2="716" stroke="#000" stroke-width="1"/><line x1="522.8" y1="712" x2="522.8" y2="716" stroke="#000" stroke-width="1"/><line x1="563.2" y1="712" x2="563.2" y2="716" stroke="#000" stroke-width="1"/><line x1="603.6" y1="712" x2="603.6" y2="716" stroke="#000" stroke-width="1"/><line x1="644.0" y1="712" x2="644.0" y2="716" stroke="#000" stroke-width="1"/><line x1="684.4" y1="712" x2="684.4" y2="716" stroke="#000" stroke-width="1"/><line x1="724.8" y1="712" x2="724.8" y2="716" stroke="#000" stroke-width="1"/><line x1="765.2" y1="712" x2="765.2" y2="716" stroke="#000" stroke-width="1"/><line x1="805.6" y1="712" x2="805.6" y2="716" stroke="#000" stroke-width="1"/><line x1="846.0" y1="712" x2="846.0" y2="716" stroke="#000" stroke-width="1"/><line x1="886.4" y1="712" x2="886.4" y2="716" stroke="#000" stroke-width="1"/><line x1="926.8" y1="712" x2="926.8" y2="716" stroke="#000" stroke-width="1"/><line x1="967.2" y1="712" x2="967.2" y2="716" stroke="#000" stroke-width="1"/><line x1="1007.6" y1="712" x2="1007.6" y2="716" stroke="#000" stroke-width="1"/><line x1="1048.0" y1="712" x2="1048.0" y2="716" stroke="#000" stroke-width="1"/><line x1="70" y1="708.4" x2="76" y2="708.4" stroke="#000" stroke-width="1.2"/><line x1="1051" y1="708.4" x2="1057" y2="708.4" stroke="#000" stroke-width="1.2"/><line x1="70" y1="682.0" x2="76" y2="682.0" stroke="#000" stroke-width="1.2"/><line x1="1051" y1="682.0" x2="1057" y2="682.0" stroke="#000" stroke-width="1.2"/><line x1="70" y1="655.6" x2="76" y2="655.6" stroke="#000" stroke-width="1.2"/><line x1="1051" y1="655.6" x2="1057" y2="655.6" stroke="#000" stroke-width="1.2"/><line x1="70" y1="629.3" x2="76" y2="629.3" stroke="#000" stroke-width="1.2"/><line x1="1051" y1="629.3" x2="1057" y2="629.3" stroke="#000" stroke-width="1.2"/><line x1="70" y1="602.9" x2="76" y2="602.9" stroke="#000" stroke-width="1.2"/><line x1="1051" y1="602.9" x2="1057" y2="602.9" stroke="#000" stroke-width="1.2"/><line x1="70" y1="576.5" x2="76" y2="576.5" stroke="#000" stroke-width="1.2"/><line x1="1051" y1="576.5" x2="1057" y2="576.5" stroke="#000" stroke-width="1.2"/><line x1="70" y1="550.1" x2="76" y2="550.1" stroke="#000" stroke-width="1.2"/><line x1="1051" y1="550.1" x2="1057" y2="550.1" stroke="#000" stroke-width="1.2"/><line x1="70" y1="523.8" x2="76" y2="523.8" stroke="#000" stroke-width="1.2"/><line x1="1051" y1="523.8" x2="1057" y2="523.8" stroke="#000" stroke-width="1.2"/><line x1="70" y1="497.4" x2="76" y2="497.4" stroke="#000" stroke-width="1.2"/><line x1="1051" y1="497.4" x2="1057" y2="497.4" stroke="#000" stroke-width="1.2"/><line x1="70" y1="471.0" x2="76" y2="471.0" stroke="#000" stroke-width="1.2"/><line x1="1051" y1="471.0" x2="1057" y2="471.0" stroke="#000" stroke-width="1.2"/><line x1="70" y1="444.6" x2="76" y2="444.6" stroke="#000" stroke-width="1.2"/><line x1="1051" y1="444.6" x2="1057" y2="444.6" stroke="#000" stroke-width="1.2"/><line x1="70" y1="418.3" x2="76" y2="418.3" stroke="#000" stroke-width="1.2"/><line x1="1051" y1="418.3" x2="1057" y2="418.3" stroke="#000" stroke-width="1.2"/><line x1="70" y1="391.9" x2="76" y2="391.9" stroke="#000" stroke-width="1.2"/><line x1="1051" y1="391.9" x2="1057" y2="391.9" stroke="#000" stroke-width="1.2"/><line x1="70" y1="365.5" x2="76" y2="365.5" stroke="#000" stroke-width="1.2"/><line x1="1051" y1="365.5" x2="1057" y2="365.5" stroke="#000" stroke-width="1.2"/><line x1="70" y1="339.1" x2="76" y2="339.1" stroke="#000" stroke-width="1.2"/><line x1="1051" y1="339.1" x2="1057" y2="339.1" stroke="#000" stroke-width="1.2"/><line x1="70" y1="312.8" x2="76" y2="312.8" stroke="#000" stroke-width="1.2"/><line x1="1051" y1="312.8" x2="1057" y2="312.8" stroke="#000" stroke-width="1.2"/><line x1="70" y1="286.4" x2="76" y2="286.4" stroke="#000" stroke-width="1.2"/><line x1="1051" y1="286.4" x2="1057" y2="286.4" stroke="#000" stroke-width="1.2"/><line x1="70" y1="260.0" x2="76" y2="260.0" stroke="#000" stroke-width="1.2"/><line x1="1051" y1="260.0" x2="1057" y2="260.0" stroke="#000" stroke-width="1.2"/><line x1="70" y1="233.6" x2="76" y2="233.6" stroke="#000" stroke-width="1.2"/><line x1="1051" y1="233.6" x2="1057" y2="233.6" stroke="#000" stroke-width="1.2"/><line x1="70" y1="207.3" x2="76" y2="207.3" stroke="#000" stroke-width="1.2"/><line x1="1051" y1="207.3" x2="1057" y2="207.3" stroke="#000" stroke-width="1.2"/><line x1="70" y1="180.9" x2="76" y2="180.9" stroke="#000" stroke-width="1.2"/><line x1="1051" y1="180.9" x2="1057" y2="180.9" stroke="#000" stroke-width="1.2"/><line x1="70" y1="154.5" x2="76" y2="154.5" stroke="#000" stroke-width="1.2"/><line x1="1051" y1="154.5" x2="1057" y2="154.5" stroke="#000" stroke-width="1.2"/><line x1="70" y1="128.1" x2="76" y2="128.1" stroke="#000" stroke-width="1.2"/><line x1="1051" y1="128.1" x2="1057" y2="128.1" stroke="#000" stroke-width="1.2"/><line x1="70" y1="101.8" x2="76" y2="101.8" stroke="#000" stroke-width="1.2"/><line x1="1051" y1="101.8" x2="1057" y2="101.8" stroke="#000" stroke-width="1.2"/><text transform="translate(67.5,714.0) scale(0.955,1)" font-family="Liberation Sans" font-size="15" text-anchor="end" fill="#000">0.0</text><text transform="translate(1057.5,714.0) scale(0.955,1)" font-family="Liberation Sans" font-size="15" fill="#000">0.0</text><text transform="translate(67.5,687.6) scale(0.955,1)" font-family="Liberation Sans" font-size="15" text-anchor="end" fill="#000">5.0</text><text transform="translate(1057.5,687.6) scale(0.955,1)" font-family="Liberation Sans" font-size="15" fill="#000">5.0</text><text transform="translate(67.5,661.2) scale(0.955,1)" font-family="Liberation Sans" font-size="15" text-anchor="end" fill="#000">10.0</text><text transform="translate(1057.5,661.2) scale(0.955,1)" font-family="Liberation Sans" font-size="15" fill="#000">10.0</text><text transform="translate(67.5,634.9) scale(0.955,1)" font-family="Liberation Sans" font-size="15" text-anchor="end" fill="#000">15.0</text><text transform="translate(1057.5,634.9) scale(0.955,1)" font-family="Liberation Sans" font-size="15" fill="#000">15.0</text><text transform="translate(67.5,608.5) scale(0.955,1)" font-family="Liberation Sans" font-size="15" text-anchor="end" fill="#000">20.0</text><text transform="translate(1057.5,608.5) scale(0.955,1)" font-family="Liberation Sans" font-size="15" fill="#000">20.0</text><text transform="translate(67.5,582.1) scale(0.955,1)" font-family="Liberation Sans" font-size="15" text-anchor="end" fill="#000">25.0</text><text transform="translate(1057.5,582.1) scale(0.955,1)" font-family="Liberation Sans" font-size="15" fill="#000">25.0</text><text transform="translate(67.5,555.8) scale(0.955,1)" font-family="Liberation Sans" font-size="15" text-anchor="end" fill="#000">30.0</text><text transform="translate(1057.5,555.8) scale(0.955,1)" font-family="Liberation Sans" font-size="15" fill="#000">30.0</text><text transform="translate(67.5,529.4) scale(0.955,1)" font-family="Liberation Sans" font-size="15" text-anchor="end" fill="#000">35.0</text><text transform="translate(1057.5,529.4) scale(0.955,1)" font-family="Liberation Sans" font-size="15" fill="#000">35.0</text><text transform="translate(67.5,503.0) scale(0.955,1)" font-family="Liberation Sans" font-size="15" text-anchor="end" fill="#000">40.0</text><text transform="translate(1057.5,503.0) scale(0.955,1)" font-family="Liberation Sans" font-size="15" fill="#000">40.0</text><text transform="translate(67.5,476.6) scale(0.955,1)" font-family="Liberation Sans" font-size="15" text-anchor="end" fill="#000">45.0</text><text transform="translate(1057.5,476.6) scale(0.955,1)" font-family="Liberation Sans" font-size="15" fill="#000">45.0</text><text transform="translate(67.5,450.2) scale(0.955,1)" font-family="Liberation Sans" font-size="15" text-anchor="end" fill="#000">50.0</text><text transform="translate(1057.5,450.2) scale(0.955,1)" font-family="Liberation Sans" font-size="15" fill="#000">50.0</text><text transform="translate(67.5,423.9) scale(0.955,1)" font-family="Liberation Sans" font-size="15" text-anchor="end" fill="#000">55.0</text><text transform="translate(1057.5,423.9) scale(0.955,1)" font-family="Liberation Sans" font-size="15" fill="#000">55.0</text><text transform="translate(67.5,397.5) scale(0.955,1)" font-family="Liberation Sans" font-size="15" text-anchor="end" fill="#000">60.0</text><text transform="translate(1057.5,397.5) scale(0.955,1)" font-family="Liberation Sans" font-size="15" fill="#000">60.0</text><text transform="translate(67.5,371.1) scale(0.955,1)" font-family="Liberation Sans" font-size="15" text-anchor="end" fill="#000">65.0</text><text transform="translate(1057.5,371.1) scale(0.955,1)" font-family="Liberation Sans" font-size="15" fill="#000">65.0</text><text transform="translate(67.5,344.8) scale(0.955,1)" font-family="Liberation Sans" font-size="15" text-anchor="end" fill="#000">70.0</text><text transform="translate(1057.5,344.8) scale(0.955,1)" font-family="Liberation Sans" font-size="15" fill="#000">70.0</text><text transform="translate(67.5,318.4) scale(0.955,1)" font-family="Liberation Sans" font-size="15" text-anchor="end" fill="#000">75.0</text><text transform="translate(1057.5,318.4) scale(0.955,1)" font-family="Liberation Sans" font-size="15" fill="#000">75.0</text><text transform="translate(67.5,292.0) scale(0.955,1)" font-family="Liberation Sans" font-size="15" text-anchor="end" fill="#000">80.0</text><text transform="translate(1057.5,292.0) scale(0.955,1)" font-family="Liberation Sans" font-size="15" fill="#000">80.0</text><text transform="translate(67.5,265.6) scale(0.955,1)" font-family="Liberation Sans" font-size="15" text-anchor="end" fill="#000">85.0</text><text transform="translate(1057.5,265.6) scale(0.955,1)" font-family="Liberation Sans" font-size="15" fill="#000">85.0</text><text transform="translate(67.5,239.2) scale(0.955,1)" font-family="Liberation Sans" font-size="15" text-anchor="end" fill="#000">90.0</text><text transform="translate(1057.5,239.2) scale(0.955,1)" font-family="Liberation Sans" font-size="15" fill="#000">90.0</text><text transform="translate(67.5,212.9) scale(0.955,1)" font-family="Liberation Sans" font-size="15" text-anchor="end" fill="#000">95.0</text><text transform="translate(1057.5,212.9) scale(0.955,1)" font-family="Liberation Sans" font-size="15" fill="#000">95.0</text><text transform="translate(67.5,186.5) scale(0.955,1)" font-family="Liberation Sans" font-size="15" text-anchor="end" fill="#000">100.0</text><text transform="translate(1057.5,186.5) scale(0.955,1)" font-family="Liberation Sans" font-size="15" fill="#000">100.0</text><text transform="translate(67.5,160.1) scale(0.955,1)" font-family="Liberation Sans" font-size="15" text-anchor="end" fill="#000">105.0</text><text transform="translate(1057.5,160.1) scale(0.955,1)" font-family="Liberation Sans" font-size="15" fill="#000">105.0</text><text transform="translate(67.5,133.7) scale(0.955,1)" font-family="Liberation Sans" font-size="15" text-anchor="end" fill="#000">110.0</text><text transform="translate(1057.5,133.7) scale(0.955,1)" font-family="Liberation Sans" font-size="15" fill="#000">110.0</text><text transform="translate(67.5,107.4) scale(0.955,1)" font-family="Liberation Sans" font-size="15" text-anchor="end" fill="#000">115.0</text><text transform="translate(1057.5,107.4) scale(0.955,1)" font-family="Liberation Sans" font-size="15" fill="#000">115.0</text><text transform="translate(78.4,730) scale(0.955,1)" font-family="Liberation Sans" font-size="15" text-anchor="middle" fill="#000">1000</text><text transform="translate(118.8,730) scale(0.955,1)" font-family="Liberation Sans" font-size="15" text-anchor="middle" fill="#000">1250</text><text transform="translate(159.2,730) scale(0.955,1)" font-family="Liberation Sans" font-size="15" text-anchor="middle" fill="#000">1500</text><text transform="translate(199.6,730) scale(0.955,1)" font-family="Liberation Sans" font-size="15" text-anchor="middle" fill="#000">1750</text><text transform="translate(240.0,730) scale(0.955,1)" font-family="Liberation Sans" font-size="15" text-anchor="middle" fill="#000">2000</text><text transform="translate(280.4,730) scale(0.955,1)" font-family="Liberation Sans" font-size="15" text-anchor="middle" fill="#000">2250</text><text transform="translate(320.8,730) scale(0.955,1)" font-family="Liberation Sans" font-size="15" text-anchor="middle" fill="#000">2500</text><text transform="translate(361.2,730) scale(0.955,1)" font-family="Liberation Sans" font-size="15" text-anchor="middle" fill="#000">2750</text><text transform="translate(401.6,730) scale(0.955,1)" font-family="Liberation Sans" font-size="15" text-anchor="middle" fill="#000">3000</text><text transform="translate(442.0,730) scale(0.955,1)" font-family="Liberation Sans" font-size="15" text-anchor="middle" fill="#000">3250</text><text transform="translate(482.4,730) scale(0.955,1)" font-family="Liberation Sans" font-size="15" text-anchor="middle" fill="#000">3500</text><text transform="translate(522.8,730) scale(0.955,1)" font-family="Liberation Sans" font-size="15" text-anchor="middle" fill="#000">3750</text><text transform="translate(563.2,730) scale(0.955,1)" font-family="Liberation Sans" font-size="15" text-anchor="middle" fill="#000">4000</text><text transform="translate(603.6,730) scale(0.955,1)" font-family="Liberation Sans" font-size="15" text-anchor="middle" fill="#000">4250</text><text transform="translate(644.0,730) scale(0.955,1)" font-family="Liberation Sans" font-size="15" text-anchor="middle" fill="#000">4500</text><text transform="translate(684.4,730) scale(0.955,1)" font-family="Liberation Sans" font-size="15" text-anchor="middle" fill="#000">4750</text><text transform="translate(724.8,730) scale(0.955,1)" font-family="Liberation Sans" font-size="15" text-anchor="middle" fill="#000">5000</text><text transform="translate(765.2,730) scale(0.955,1)" font-family="Liberation Sans" font-size="15" text-anchor="middle" fill="#000">5250</text><text transform="translate(805.6,730) scale(0.955,1)" font-family="Liberation Sans" font-size="15" text-anchor="middle" fill="#000">5500</text><text transform="translate(846.0,730) scale(0.955,1)" font-family="Liberation Sans" font-size="15" text-anchor="middle" fill="#000">5750</text><text transform="translate(886.4,730) scale(0.955,1)" font-family="Liberation Sans" font-size="15" text-anchor="middle" fill="#000">6000</text><text transform="translate(926.8,730) scale(0.955,1)" font-family="Liberation Sans" font-size="15" text-anchor="middle" fill="#000">6250</text><text transform="translate(967.2,730) scale(0.955,1)" font-family="Liberation Sans" font-size="15" text-anchor="middle" fill="#000">6500</text><text transform="translate(1007.6,730) scale(0.955,1)" font-family="Liberation Sans" font-size="15" text-anchor="middle" fill="#000">6750</text><text transform="translate(1048.0,730) scale(0.955,1)" font-family="Liberation Sans" font-size="15" text-anchor="middle" fill="#000">7000</text><text x="563" y="749" font-family="Liberation Sans" font-size="14.5" text-anchor="middle" fill="#000">Revolutions (rpm)</text><text transform="translate(26,405) rotate(-90)" font-family="Liberation Sans" font-size="14" text-anchor="middle" fill="#000">SAE Wheel Power (hp)</text><text transform="translate(1101,405) rotate(90)" font-family="Liberation Sans" font-size="14" text-anchor="middle" fill="#000">SAE Torque (ft-lbs)</text><line x1="200" y1="96.5" x2="219.5" y2="96.5" stroke="#000" stroke-width="1"/><text x="224" y="98" font-family="Liberation Sans" font-size="12" fill="#000" xml:space="preserve">Wheel  (hp)</text><line x1="360" y1="96" x2="380" y2="96" stroke="#000" stroke-width="1"/><circle cx="370" cy="96" r="4.5" fill="none" stroke="#000" stroke-width="1.2"/><text x="385" y="98" font-family="Liberation Sans" font-size="12" fill="#000">Engine (ft-lbs)</text></svg>
<div class="a" style="left:893px;top:87px;width:143px;height:17px;background:#10c8f4;border-right:2px solid #203050;border-bottom:2px solid #203050;border-top:1px solid #80e8ff;border-left:1px solid #80e8ff"></div>
<div class="a" style="left:893px;top:90px;width:141px;text-align:center;font-size:10px;line-height:12px;color:#102850">SETTINGS</div>
<div class="a" style="left:1107px;top:99px;width:18px;height:18px;background:linear-gradient(#48ee48,#20e820);border:1.5px solid #000"></div>
<svg class="a" style="left:1110px;top:103px" width="12" height="10"><path d="M1,1 L11,1 L7,5 L7,8 L5,8 L5,5 Z" fill="#062a06"/></svg>
<div class="a" style="left:10px;top:692px;width:24px;height:21px;background:#f040f0;border-right:2px solid #602060;border-bottom:2px solid #602060;border-top:1px solid #ff90ff;border-left:1px solid #ff90ff"></div>
<div class="a" style="left:18px;top:695px;font-size:12px;line-height:14px;color:#400040">&gt;</div>
<div class="a" style="left:32px;top:774px;width:1093px;height:217px;background:#fff"></div>
<div class="a" style="left:32px;top:753px;width:1094px;height:22px;background:#02c8f2;border-top:1px solid #60e0ff;border-bottom:2px solid #0a1a30"></div>
<div class="a" style="left:236px;top:753px;width:1px;height:20px;background:#0a1a30"></div><div class="a" style="left:237px;top:753px;width:1px;height:20px;background:#60e0ff"></div>
<div class="a" style="left:492px;top:753px;width:1px;height:20px;background:#0a1a30"></div><div class="a" style="left:492px;top:753px;width:1px;height:20px;background:#60e0ff"></div>
<div class="a" style="left:580px;top:753px;width:1px;height:20px;background:#0a1a30"></div><div class="a" style="left:582px;top:753px;width:1px;height:20px;background:#60e0ff"></div>
<div class="a" style="left:636px;top:753px;width:1px;height:20px;background:#0a1a30"></div><div class="a" style="left:638px;top:753px;width:1px;height:20px;background:#60e0ff"></div>
<div class="a" style="left:704px;top:753px;width:1px;height:20px;background:#0a1a30"></div><div class="a" style="left:704px;top:753px;width:1px;height:20px;background:#60e0ff"></div>
<div class="a" style="left:850px;top:753px;width:1px;height:20px;background:#0a1a30"></div><div class="a" style="left:850px;top:753px;width:1px;height:20px;background:#60e0ff"></div>
<div class="a" style="left:1063px;top:753px;width:1px;height:20px;background:#0a1a30"></div><div class="a" style="left:1064px;top:753px;width:1px;height:20px;background:#60e0ff"></div>
<div class="a" style="left:1125px;top:753px;width:2px;height:21px;background:#0a1a30"></div>
<div class="a" style="left:32px;top:755px;width:204px;text-align:center;font-size:12px;line-height:14px;letter-spacing:0.8px;color:#1c3a78">Run File</div>
<div class="a" style="left:236px;top:755px;width:256px;text-align:center;font-size:12px;line-height:14px;letter-spacing:0.8px;color:#1c3a78">Run Title</div>
<div class="a" style="left:492px;top:755px;width:89px;text-align:center;font-size:12px;line-height:14px;letter-spacing:0.8px;color:#1c3a78">AirP(in.Hg)</div>
<div class="a" style="left:580px;top:755px;width:56px;text-align:center;font-size:12px;line-height:14px;letter-spacing:0.8px;color:#1c3a78">AirT(°F)</div>
<div class="a" style="left:636px;top:755px;width:67px;text-align:center;font-size:12px;line-height:14px;letter-spacing:0.8px;color:#1c3a78">CF SAE</div>
<div class="a" style="left:704px;top:755px;width:146px;text-align:center;font-size:12px;line-height:14px;letter-spacing:0.8px;color:#1c3a78">Date &amp; Time</div>
<div class="a" style="left:850px;top:755px;width:214px;text-align:center;font-size:12px;line-height:14px;letter-spacing:0.8px;color:#1c3a78">Maximum Rates</div>
<div class="a" style="left:1063px;top:755px;width:62px;text-align:center;font-size:12px;line-height:14px;letter-spacing:0.8px;color:#1c3a78">Ratio</div>
<div class="a" style="left:32px;top:792px;width:1077px;height:1px;background:#e2e2e2"></div>
<div class="a" style="left:32px;top:810px;width:1077px;height:1px;background:#e2e2e2"></div>
<div class="a" style="left:32px;top:828px;width:1077px;height:1px;background:#e2e2e2"></div>
<div class="a" style="left:32px;top:846px;width:1077px;height:1px;background:#e2e2e2"></div>
<div class="a" style="left:32px;top:864px;width:1077px;height:1px;background:#e2e2e2"></div>
<div class="a" style="left:32px;top:882px;width:1077px;height:1px;background:#e2e2e2"></div>
<div class="a" style="left:32px;top:900px;width:1077px;height:1px;background:#e2e2e2"></div>
<div class="a" style="left:32px;top:918px;width:1077px;height:1px;background:#e2e2e2"></div>
<div class="a" style="left:32px;top:936px;width:1077px;height:1px;background:#e2e2e2"></div>
<div class="a" style="left:32px;top:954px;width:1077px;height:1px;background:#e2e2e2"></div>
<div class="a" style="left:32px;top:972px;width:1077px;height:1px;background:#e2e2e2"></div>
<div class="a" style="left:32px;top:990px;width:1077px;height:1px;background:#e2e2e2"></div>
<div class="a" style="left:236px;top:774px;width:1px;height:217px;background:#e2e2e2"></div>
<div class="a" style="left:492px;top:774px;width:1px;height:217px;background:#e2e2e2"></div>
<div class="a" style="left:580px;top:774px;width:1px;height:217px;background:#e2e2e2"></div>
<div class="a" style="left:636px;top:774px;width:1px;height:217px;background:#e2e2e2"></div>
<div class="a" style="left:704px;top:774px;width:1px;height:217px;background:#e2e2e2"></div>
<div class="a" style="left:850px;top:774px;width:1px;height:217px;background:#e2e2e2"></div>
<div class="a" style="left:1063px;top:774px;width:1px;height:217px;background:#e2e2e2"></div>
<div class="a" style="left:33px;top:777px;width:202px;overflow:hidden;font-size:12px;line-height:14px;letter-spacing:0.2px;color:#101040">Mike Dalheim 103.022</div>
<div class="a" style="left:237px;top:777px;width:254px;overflow:hidden;font-size:12px;line-height:14px;letter-spacing:0.2px;color:#101040">2016,103,km2,fm212,a48c,vhho,stktbi</div>
<div class="a" style="left:492px;top:777px;width:89px;text-align:center;font-size:12px;line-height:14px;letter-spacing:0.2px;color:#101040">29.36</div>
<div class="a" style="left:580px;top:777px;width:56px;text-align:center;font-size:12px;line-height:14px;letter-spacing:0.2px;color:#101040">73.8</div>
<div class="a" style="left:636px;top:777px;width:67px;text-align:center;font-size:12px;line-height:14px;letter-spacing:0.2px;color:#101040">1.007</div>
<div class="a" style="left:704px;top:777px;width:144px;overflow:hidden;font-size:12px;line-height:14px;letter-spacing:0.2px;color:#101040">27-03-2017 / 14:45:18</div>
<div class="a" style="left:850px;top:777px;width:212px;overflow:hidden;font-size:12px;line-height:14px;letter-spacing:0.4px;color:#101040">93.5Hp@ 5390rpm / 114.0ft-lbs@ 3502</div>
<div class="a" style="left:1076px;top:777px;width:48px;overflow:hidden;font-size:12px;line-height:14px;letter-spacing:0.2px;color:#000">1.0</div>
<div class="a" style="left:33px;top:795px;width:202px;overflow:hidden;font-size:12px;line-height:14px;letter-spacing:0.2px;color:#a02020">Mike Dalheim 103.003</div>
<div class="a" style="left:237px;top:795px;width:254px;overflow:hidden;font-size:12px;line-height:14px;letter-spacing:0.2px;color:#a02020">2016,103,ac,stk run</div>
<div class="a" style="left:492px;top:795px;width:89px;text-align:center;font-size:12px;line-height:14px;letter-spacing:0.2px;color:#a02020">29.57</div>
<div class="a" style="left:580px;top:795px;width:56px;text-align:center;font-size:12px;line-height:14px;letter-spacing:0.2px;color:#a02020">69.3</div>
<div class="a" style="left:636px;top:795px;width:67px;text-align:center;font-size:12px;line-height:14px;letter-spacing:0.2px;color:#a02020">0.993</div>
<div class="a" style="left:704px;top:795px;width:144px;overflow:hidden;font-size:12px;line-height:14px;letter-spacing:0.2px;color:#a02020">11-03-2017 / 10:21:47</div>
<div class="a" style="left:850px;top:795px;width:212px;overflow:hidden;font-size:12px;line-height:14px;letter-spacing:0.4px;color:#a02020">77.9Hp@ 4929rpm / 101.9ft-lbs@ 3409</div>
<div class="a" style="left:1076px;top:795px;width:48px;overflow:hidden;font-size:12px;line-height:14px;letter-spacing:0.2px;color:#000">1.0</div>
<div class="a" style="left:1109px;top:775px;width:16px;height:17px;background:#f0f0f0;border-right:2px solid #303030;border-bottom:2px solid #303030"></div>
<svg class="a" style="left:1110px;top:779px" width="14" height="8"><path d="M0,0 L14,0 L7,7.5 Z" fill="#000"/></svg>
<div class="a" style="left:1109px;top:793px;width:16px;height:17px;background:#f0f0f0;border-right:2px solid #303030;border-bottom:2px solid #303030"></div>
<svg class="a" style="left:1110px;top:797px" width="14" height="8"><path d="M0,0 L14,0 L7,7.5 Z" fill="#000"/></svg>
<div class="a" style="left:1109px;top:811px;width:16px;height:17px;background:#f0f0f0;border-right:2px solid #303030;border-bottom:2px solid #303030"></div>
<svg class="a" style="left:1110px;top:815px" width="14" height="8"><path d="M0,0 L14,0 L7,7.5 Z" fill="#000"/></svg>
<div class="a" style="left:1109px;top:829px;width:16px;height:17px;background:#f0f0f0;border-right:2px solid #303030;border-bottom:2px solid #303030"></div>
<svg class="a" style="left:1110px;top:833px" width="14" height="8"><path d="M0,0 L14,0 L7,7.5 Z" fill="#000"/></svg>
<div class="a" style="left:1109px;top:847px;width:16px;height:17px;background:#f0f0f0;border-right:2px solid #303030;border-bottom:2px solid #303030"></div>
<svg class="a" style="left:1110px;top:851px" width="14" height="8"><path d="M0,0 L14,0 L7,7.5 Z" fill="#000"/></svg>
<div class="a" style="left:1109px;top:865px;width:16px;height:17px;background:#f0f0f0;border-right:2px solid #303030;border-bottom:2px solid #303030"></div>
<svg class="a" style="left:1110px;top:869px" width="14" height="8"><path d="M0,0 L14,0 L7,7.5 Z" fill="#000"/></svg>
<div class="a" style="left:1109px;top:883px;width:16px;height:17px;background:#f0f0f0;border-right:2px solid #303030;border-bottom:2px solid #303030"></div>
<svg class="a" style="left:1110px;top:887px" width="14" height="8"><path d="M0,0 L14,0 L7,7.5 Z" fill="#000"/></svg>
<div class="a" style="left:1109px;top:901px;width:16px;height:17px;background:#f0f0f0;border-right:2px solid #303030;border-bottom:2px solid #303030"></div>
<svg class="a" style="left:1110px;top:905px" width="14" height="8"><path d="M0,0 L14,0 L7,7.5 Z" fill="#000"/></svg>
<div class="a" style="left:1109px;top:919px;width:16px;height:17px;background:#f0f0f0;border-right:2px solid #303030;border-bottom:2px solid #303030"></div>
<svg class="a" style="left:1110px;top:923px" width="14" height="8"><path d="M0,0 L14,0 L7,7.5 Z" fill="#000"/></svg>
<div class="a" style="left:1109px;top:937px;width:16px;height:17px;background:#f0f0f0;border-right:2px solid #303030;border-bottom:2px solid #303030"></div>
<svg class="a" style="left:1110px;top:941px" width="14" height="8"><path d="M0,0 L14,0 L7,7.5 Z" fill="#000"/></svg>
<div class="a" style="left:1109px;top:955px;width:16px;height:17px;background:#f0f0f0;border-right:2px solid #303030;border-bottom:2px solid #303030"></div>
<svg class="a" style="left:1110px;top:959px" width="14" height="8"><path d="M0,0 L14,0 L7,7.5 Z" fill="#000"/></svg>
<div class="a" style="left:1109px;top:973px;width:16px;height:17px;background:#f0f0f0;border-right:2px solid #303030;border-bottom:2px solid #303030"></div>
<svg class="a" style="left:1110px;top:977px" width="14" height="8"><path d="M0,0 L14,0 L7,7.5 Z" fill="#000"/></svg>
<div class="a" style="left:10px;top:751px;width:23px;height:21px;background:#f89a12;border-top:2px solid #1a1a1a;border-left:2px solid #1a1a1a"></div>
<svg class="a" style="left:18px;top:757px" width="8" height="10"><path d="M6,1 L2,5 L6,9" fill="none" stroke="#1a1a1a" stroke-width="1.6"/></svg>
<div class="a" style="left:12px;top:774px;width:16px;height:208px;background:#10f08a"></div>
<div class="a" style="left:15px;top:778px;width:11px;height:8px;background:#061a0e;border:1px solid #0a4020;box-shadow:0 0 0 1px #30c070"></div>
<div class="a" style="left:15px;top:796px;width:11px;height:8px;background:#061a0e;border:1px solid #0a4020;box-shadow:0 0 0 1px #30c070"></div>
<div class="a" style="left:32px;top:990px;width:1094px;height:2px;background:#707070"></div>
<div class="a" style="left:1129px;top:95px;width:137px;height:885px;border:2px solid #000"></div>
<div class="a" style="left:1162px;top:86px;width:96px;height:16px;background:#e2e2e2"></div>
<div class="a" style="left:1165px;top:86px;font-weight:bold;font-size:13px;line-height:15px;letter-spacing:0.3px;color:#000;transform-origin:0 0;transform:scaleX(1.2);transform:scaleX(1.19)">Graph tools</div>
<div class="a" style="left:1135px;top:114px;width:117px;height:110px;border:1px solid #bdbdbd;box-shadow:inset 1px 1px 0 #fff,1px 1px 0 #fff"></div>
<div class="a" style="left:1140px;top:103px;width:123px;height:18px;background:#dedede"></div>
<div class="a" style="left:1143px;top:105px;font-weight:bold;font-size:13px;line-height:15px;letter-spacing:0.3px;color:#000;transform-origin:0 0;transform:scaleX(1.2);font-size:14px;transform:scaleX(1.137)">Current Values</div>
<div class="a" style="left:1149px;top:122px;font-weight:bold;font-size:14px;line-height:16px;color:#000;transform-origin:0 0;transform:scaleX(0.86)">rpm: 6053.6</div>
<div class="a" style="left:1149px;top:141px;font-weight:bold;font-size:14px;line-height:16px;color:#000;transform-origin:0 0;transform:scaleX(0.86)">ft-lbs: 47.1</div>
<div class="a" style="left:1149px;top:161px;font-weight:bold;font-size:14px;line-height:16px;color:#000;transform-origin:0 0;transform:scaleX(0.86)">hp: 47.1</div>
<div class="a" style="left:1149px;top:194px;width:7px;height:2px;background:#000"></div>
<div class="a" style="left:1149px;top:213px;width:7px;height:2px;background:#000"></div>
<div class="a" style="left:1140px;top:227px;width:86px;height:18px;border:1px dotted #303030;background:#e0e0e0"></div>
<div class="a" style="left:1142px;top:229px;font-weight:bold;font-size:13px;line-height:15px;letter-spacing:0.3px;color:#000;transform-origin:0 0;transform:scaleX(1.2);transform:scaleX(1.18)">Correction</div>
<div class="a" style="left:1138px;top:249px;width:118px;height:20px;background:#fff;border-bottom:2px solid #707070;border-top:1px solid #d0d0d0"></div>
<div class="a" style="left:1234px;top:249px;width:22px;height:20px;background:linear-gradient(90deg,#f4f4f4,#c8c8c8);border-bottom:2px solid #707070"></div>
<svg class="a" style="left:1238px;top:254px" width="14" height="8"><path d="M0,0 L14,0 L9,8 L5,8 Z" fill="#000"/></svg>
<div class="a" style="left:1138px;top:251px;width:98px;text-align:center;font-size:13px;line-height:15px;color:#000">SAE</div>
<div class="a" style="left:1136px;top:283px;width:116px;height:106px;border:1px solid #bdbdbd;box-shadow:inset 1px 1px 0 #fff,1px 1px 0 #fff"></div>
<div class="a" style="left:1149px;top:275px;width:74px;height:16px;background:#dedede"></div>
<div class="a" style="left:1152px;top:276px;font-weight:bold;font-size:13px;line-height:15px;letter-spacing:0.3px;color:#000;transform-origin:0 0;transform:scaleX(1.2)">Zooming</div>
<div class="a" style="left:1148px;top:298px;width:38px;height:37px;background:#c4c4c4;border:1px solid #7a7a7a"></div>
<svg class="a" style="left:1149px;top:300px" width="36" height="34"><circle cx="13" cy="13" r="9.5" fill="none" stroke="#6a6a6a" stroke-width="1.2" stroke-dasharray="3 1.5"/><path d="M19,20 L27,29" stroke="#3a6a6a" stroke-width="5" stroke-linecap="round"/><path d="M19,20 L27,29" stroke="#78d4d4" stroke-width="3" stroke-linecap="round"/><path d="M22,7 L22,15 M9,23 L16,23" stroke="#505050" stroke-width="1.6"/><path d="M7,13 L19,13 M13,7 L13,19" stroke="#5a5a5a" stroke-width="3"/></svg>
<div class="a" style="left:1188px;top:298px;width:38px;height:37px;background:#c4c4c4;border:1px solid #7a7a7a"></div>
<svg class="a" style="left:1189px;top:300px" width="36" height="34"><circle cx="13" cy="13" r="9.5" fill="none" stroke="#6a6a6a" stroke-width="1.2" stroke-dasharray="3 1.5"/><path d="M19,20 L27,29" stroke="#3a6a6a" stroke-width="5" stroke-linecap="round"/><path d="M19,20 L27,29" stroke="#78d4d4" stroke-width="3" stroke-linecap="round"/><path d="M22,7 L22,15 M9,23 L16,23" stroke="#505050" stroke-width="1.6"/><path d="M6,13 L20,13" stroke="#5a5a5a" stroke-width="3"/></svg>
<div class="a" style="left:1146px;top:343px;width:13px;height:14px;border-top:2px solid #202020;border-left:2px solid #202020;background:rgba(255,255,255,.5)"></div>
<div class="a" style="left:1167px;top:341.5px;font-size:13px;line-height:15px;color:#000">Point snap</div>
<div class="a" style="left:1146px;top:362px;width:13px;height:14px;border-top:2px solid #202020;border-left:2px solid #202020;background:rgba(255,255,255,.5)"></div>
<div class="a" style="left:1167px;top:360.5px;font-size:13px;line-height:15px;color:#000">Zoom Tools</div>
<div class="a" style="left:1136px;top:405px;width:116px;height:83px;border:1px solid #bdbdbd;box-shadow:inset 1px 1px 0 #fff,1px 1px 0 #fff"></div>
<div class="a" style="left:1150px;top:396px;width:92px;height:16px;background:#dedede"></div>
<div class="a" style="left:1154px;top:397px;font-weight:bold;font-size:13px;line-height:15px;letter-spacing:0.3px;color:#000;transform-origin:0 0;transform:scaleX(1.2)">Smoothing</div>
<svg class="a" style="left:1144px;top:418px" width="18" height="18"><circle cx="9.5" cy="9.5" r="7.5" fill="#fbfbfb" opacity="0.9"/><path d="M3.4,13.2 A6.5,6.5 0 0 1 12.7,3.4" fill="none" stroke="#101010" stroke-width="1.8"/><circle cx="9" cy="9" r="3" fill="#000"/></svg>
<div class="a" style="left:1167px;top:419px;font-weight:bold;font-size:15px;line-height:16px;color:#c01818">hp</div>
<svg class="a" style="left:1196px;top:418px" width="18" height="18"><circle cx="9.5" cy="9.5" r="7.5" fill="#fbfbfb" opacity="0.9"/><path d="M3.4,13.2 A6.5,6.5 0 0 1 12.7,3.4" fill="none" stroke="#101010" stroke-width="1.8"/></svg>
<div class="a" style="left:1219px;top:420px;font-weight:bold;font-size:14px;line-height:16px;color:#1818a0;transform-origin:0 0;transform:scaleX(1.2)">AFR</div>
<div class="a" style="left:1153px;top:449px;width:92px;height:8px;background:#7c7c7c;border-radius:4px"></div>
<svg class="a" style="left:1146px;top:444px" width="12" height="18"><path d="M1,2 Q6,-1 11,2 L10,12 Q6,18 2,12 Z" fill="#e81010"/></svg>
<div class="a" style="left:1152.5px;top:463px;width:1px;height:5px;background:#000"></div>
<div class="a" style="left:1146.5px;top:470px;width:13px;text-align:center;font-size:12px;line-height:12px;color:#000">0</div>
<div class="a" style="left:1170.3px;top:463px;width:1px;height:5px;background:#000"></div>
<div class="a" style="left:1164.3px;top:470px;width:13px;text-align:center;font-size:12px;line-height:12px;color:#000">1</div>
<div class="a" style="left:1188.1px;top:463px;width:1px;height:5px;background:#000"></div>
<div class="a" style="left:1182.1px;top:470px;width:13px;text-align:center;font-size:12px;line-height:12px;color:#000">2</div>
<div class="a" style="left:1205.9px;top:463px;width:1px;height:5px;background:#000"></div>
<div class="a" style="left:1199.9px;top:470px;width:13px;text-align:center;font-size:12px;line-height:12px;color:#000">3</div>
<div class="a" style="left:1223.7px;top:463px;width:1px;height:5px;background:#000"></div>
<div class="a" style="left:1217.7px;top:470px;width:13px;text-align:center;font-size:12px;line-height:12px;color:#000">4</div>
<div class="a" style="left:1241.5px;top:463px;width:1px;height:5px;background:#000"></div>
<div class="a" style="left:1235.5px;top:470px;width:13px;text-align:center;font-size:12px;line-height:12px;color:#000">5</div>
<div class="a" style="left:1136px;top:503px;width:116px;height:128px;border:1px solid #bdbdbd;box-shadow:inset 1px 1px 0 #fff,1px 1px 0 #fff"></div>
<div class="a" style="left:1149px;top:494px;width:92px;height:16px;background:#dedede"></div>
<div class="a" style="left:1152px;top:495px;font-weight:bold;font-size:13px;line-height:15px;letter-spacing:0.3px;color:#000;transform-origin:0 0;transform:scaleX(1.2)">Left Y-Axis</div>
<svg class="a" style="left:1143px;top:514px" width="18" height="18"><circle cx="9.5" cy="9.5" r="7.5" fill="#fbfbfb" opacity="0.9"/><path d="M3.4,13.2 A6.5,6.5 0 0 1 12.7,3.4" fill="none" stroke="#101010" stroke-width="1.8"/><circle cx="9" cy="9" r="3" fill="#000"/></svg>
<div class="a" style="left:1167px;top:515px;font-size:13px;line-height:15px;color:#000">Show Grid</div>
<svg class="a" style="left:1143px;top:535px" width="18" height="18"><circle cx="9.5" cy="9.5" r="7.5" fill="#fbfbfb" opacity="0.9"/><path d="M3.4,13.2 A6.5,6.5 0 0 1 12.7,3.4" fill="none" stroke="#101010" stroke-width="1.8"/></svg>
<div class="a" style="left:1167px;top:536px;font-size:13px;line-height:15px;color:#000">Autoscale</div>
<svg class="a" style="left:1143px;top:557px" width="18" height="18"><circle cx="9.5" cy="9.5" r="7.5" fill="#fbfbfb" opacity="0.9"/><path d="M3.4,13.2 A6.5,6.5 0 0 1 12.7,3.4" fill="none" stroke="#101010" stroke-width="1.8"/><circle cx="9" cy="9" r="3" fill="#000"/></svg>
<div class="a" style="left:1167px;top:558px;font-size:13px;line-height:15px;color:#000">Manual</div>
<div class="a" style="left:1153px;top:583px;font-size:13px;line-height:15px;color:#000">Min</div><div class="a" style="left:1201px;top:583px;font-size:13px;line-height:15px;color:#000">Max</div>
<div class="a" style="left:1148px;top:601px;width:35px;height:20px;background:#fcfcfa;border-top:2px solid #c8c8c8;border-left:2px solid #c8c8c8;border-bottom:1px solid #f4f4f4;border-right:1px solid #f4f4f4;text-align:right;padding-right:5px;font-size:13px;line-height:15px;color:#000;line-height:18px;font-size:12px;color:#000">0</div>
<div class="a" style="left:1198px;top:599px;width:35px;height:21px;background:#fcfcfa;border-top:2px solid #c8c8c8;border-left:2px solid #c8c8c8;border-bottom:1px solid #f4f4f4;border-right:1px solid #f4f4f4;text-align:right;padding-right:5px;font-size:13px;line-height:15px;color:#000;line-height:19px;font-size:12px;color:#000">115</div>
<div class="a" style="left:1136px;top:645px;width:116px;height:128px;border:1px solid #bdbdbd;box-shadow:inset 1px 1px 0 #fff,1px 1px 0 #fff"></div>
<div class="a" style="left:1149px;top:636px;width:100px;height:16px;background:#dedede"></div>
<div class="a" style="left:1152px;top:637px;font-weight:bold;font-size:13px;line-height:15px;letter-spacing:0.3px;color:#000;transform-origin:0 0;transform:scaleX(1.2)">Right Y-Axis</div>
<svg class="a" style="left:1143px;top:656px" width="18" height="18"><circle cx="9.5" cy="9.5" r="7.5" fill="#fbfbfb" opacity="0.9"/><path d="M3.4,13.2 A6.5,6.5 0 0 1 12.7,3.4" fill="none" stroke="#101010" stroke-width="1.8"/></svg>
<div class="a" style="left:1167px;top:657px;font-size:13px;line-height:15px;color:#000">Show Grid</div>
<svg class="a" style="left:1143px;top:677px" width="18" height="18"><circle cx="9.5" cy="9.5" r="7.5" fill="#fbfbfb" opacity="0.9"/><path d="M3.4,13.2 A6.5,6.5 0 0 1 12.7,3.4" fill="none" stroke="#101010" stroke-width="1.8"/></svg>
<div class="a" style="left:1167px;top:677px;font-size:13px;line-height:15px;color:#000">AutoScale</div>
<svg class="a" style="left:1143px;top:698px" width="18" height="18"><circle cx="9.5" cy="9.5" r="7.5" fill="#fbfbfb" opacity="0.9"/><path d="M3.4,13.2 A6.5,6.5 0 0 1 12.7,3.4" fill="none" stroke="#101010" stroke-width="1.8"/><circle cx="9" cy="9" r="3" fill="#000"/></svg>
<div class="a" style="left:1167px;top:699px;font-size:13px;line-height:15px;color:#000">Manual</div>
<div class="a" style="left:1153px;top:725px;font-size:13px;line-height:15px;color:#000">Min</div><div class="a" style="left:1201px;top:725px;font-size:13px;line-height:15px;color:#000">Max</div>
<div class="a" style="left:1148px;top:743px;width:35px;height:20px;background:#fcfcfa;border-top:2px solid #c8c8c8;border-left:2px solid #c8c8c8;border-bottom:1px solid #f4f4f4;border-right:1px solid #f4f4f4;text-align:right;padding-right:5px;font-size:13px;line-height:15px;color:#000;line-height:18px;font-size:12px;color:#000">0</div>
<div class="a" style="left:1198px;top:741px;width:35px;height:21px;background:#fcfcfa;border-top:2px solid #c8c8c8;border-left:2px solid #c8c8c8;border-bottom:1px solid #f4f4f4;border-right:1px solid #f4f4f4;text-align:right;padding-right:5px;font-size:13px;line-height:15px;color:#000;line-height:19px;font-size:12px;color:#000">115</div>
<div class="a" style="left:1136px;top:795px;width:116px;height:166px;border:1px solid #bdbdbd;box-shadow:inset 1px 1px 0 #fff,1px 1px 0 #fff"></div>
<div class="a" style="left:1148px;top:786px;width:58px;height:16px;background:#dedede"></div>
<div class="a" style="left:1151px;top:787px;font-weight:bold;font-size:13px;line-height:15px;letter-spacing:0.3px;color:#000;transform-origin:0 0;transform:scaleX(1.2);transform:scaleX(1.27)">X-axis</div>
<svg class="a" style="left:1144px;top:807px" width="18" height="18"><circle cx="9.5" cy="9.5" r="7.5" fill="#fbfbfb" opacity="0.9"/><path d="M3.4,13.2 A6.5,6.5 0 0 1 12.7,3.4" fill="none" stroke="#101010" stroke-width="1.8"/><circle cx="9" cy="9" r="3" fill="#000"/></svg>
<div class="a" style="left:1167px;top:808px;font-size:13px;line-height:15px;color:#000">RPM</div>
<svg class="a" style="left:1144px;top:827px" width="18" height="18"><circle cx="9.5" cy="9.5" r="7.5" fill="#fbfbfb" opacity="0.9"/><path d="M3.4,13.2 A6.5,6.5 0 0 1 12.7,3.4" fill="none" stroke="#101010" stroke-width="1.8"/></svg>
<div class="a" style="left:1167px;top:828px;font-size:13px;line-height:15px;color:#000">Speed</div>
<svg class="a" style="left:1144px;top:847px" width="18" height="18"><circle cx="9.5" cy="9.5" r="7.5" fill="#fbfbfb" opacity="0.9"/><path d="M3.4,13.2 A6.5,6.5 0 0 1 12.7,3.4" fill="none" stroke="#101010" stroke-width="1.8"/></svg>
<div class="a" style="left:1167px;top:848px;font-size:13px;line-height:15px;color:#000">Time</div>
<svg class="a" style="left:1144px;top:876px" width="18" height="18"><circle cx="9.5" cy="9.5" r="7.5" fill="#fbfbfb" opacity="0.9"/><path d="M3.4,13.2 A6.5,6.5 0 0 1 12.7,3.4" fill="none" stroke="#101010" stroke-width="1.8"/><circle cx="9" cy="9" r="3" fill="#000"/></svg>
<div class="a" style="left:1167px;top:876px;font-size:13px;line-height:15px;color:#000">AutoScale</div>
<svg class="a" style="left:1144px;top:897px" width="18" height="18"><circle cx="9.5" cy="9.5" r="7.5" fill="#fbfbfb" opacity="0.9"/><path d="M3.4,13.2 A6.5,6.5 0 0 1 12.7,3.4" fill="none" stroke="#101010" stroke-width="1.8"/></svg>
<div class="a" style="left:1167px;top:898px;font-size:13px;line-height:15px;color:#000">Manual</div>
<div class="a" style="left:1147px;top:865px;width:71px;height:1px;background:#f8f8f8"></div>
<div class="a" style="left:1153px;top:917px;font-size:13px;line-height:15px;color:#000;color:#a8a8a8">Min</div><div class="a" style="left:1201px;top:917px;font-size:13px;line-height:15px;color:#000;color:#a8a8a8">Max</div>
<div class="a" style="left:1146px;top:932px;width:36px;height:23px;background:#e2e2e2;border-top:2px solid #c8c8c8;border-left:2px solid #c8c8c8;border-bottom:1px solid #f4f4f4;border-right:1px solid #f4f4f4;text-align:right;padding-right:5px;font-size:13px;line-height:15px;color:#000;line-height:21px;font-size:12px;color:#a8a8a8">0</div>
<div class="a" style="left:1197px;top:932px;width:42px;height:23px;background:#e2e2e2;border-top:2px solid #c8c8c8;border-left:2px solid #c8c8c8;border-bottom:1px solid #f4f4f4;border-right:1px solid #f4f4f4;text-align:right;padding-right:5px;font-size:13px;line-height:15px;color:#000;line-height:21px;font-size:12px;color:#a8a8a8">10000</div>
<div class="a" style="left:1272px;top:84px;width:1px;height:908px;background:#8a8a8a"></div>
<div class="a" style="left:0;top:992px;width:1280px;height:2px;background:#dce4f4"></div>
<div class="a" style="left:0;top:994px;width:1280px;height:30px;background:linear-gradient(#1a50b8 0,#4a90f0 1px,#4a8ef0 3px,#1d52d6 5px,#2258d8 10px,#2862dc 22px,#2a64de 25px,#1a48c0 30px)"></div>
<div class="a" style="left:0;top:994px;width:96px;height:30px;border-radius:0 12px 12px 0;background:radial-gradient(ellipse 60% 80% at 45% 50%,#44b044 0,#34a034 60%,#2a8a2a 100%)"></div>
<svg class="a" style="left:10px;top:1000px" width="20" height="18"><path d="M2,2 L9,1 L9,8 L1,9 Z" fill="#e86a2a"/><path d="M11,1 L19,0 L18,7 L11,8 Z" fill="#6ac038"/><path d="M1,11 L9,10 L9,17 L0,18 Z" fill="#3a7ae8"/><path d="M11,10 L18,9 L18,16 L11,17 Z" fill="#f8c818"/></svg>
<div class="a b" style="left:35px;top:999px;font-size:17px;line-height:20px;font-style:italic;color:#f4fff0;text-shadow:1px 1px 1px #1a4a1a">start</div>
<div class="a" style="left:106px;top:997px;width:160px;height:24px;border-radius:3px;background:#1e4cc4;border:1px solid #1a40a8;box-shadow:inset 1px 1px 0 #3a6ae0"></div>
<svg class="a" style="left:116px;top:1001px" width="18" height="18" viewBox="0 0 20 20"><g fill="none" stroke-width="2.4"><path d="M4.5,8 A7,7 0 0 1 8,3.8" stroke="#e08080"/><path d="M10.5,3.3 A7,7 0 0 1 15.5,6.5" stroke="#f0d0a0"/><path d="M16.3,9 A7,7 0 0 1 15.5,15" stroke="#c05050"/><path d="M13,17 A7,7 0 0 1 8,17.3" stroke="#e0c0a0"/><path d="M6.5,16.3 A7,7 0 0 1 3.3,11.5" stroke="#c0d080"/></g><circle cx="10" cy="10.5" r="2" fill="#a06040"/></svg>
<div class="a" style="left:136px;top:1002px;font-size:11px;line-height:14px;color:#fff">Advanced Dyno Station</div>
<div class="a" style="left:1187px;top:994px;width:93px;height:30px;background:linear-gradient(#40a8f8 0,#1a90ee 3px,#0f88e8 50%,#0a7ee0 100%);border-left:1px solid #0a3a9a"></div>
<svg class="a" style="left:1179px;top:999px" width="20" height="20"><circle cx="10" cy="10" r="8.5" fill="#4a90e8" stroke="#a8d0ff" stroke-width="1"/><path d="M12,5 L7,10 L12,15" fill="none" stroke="#fff" stroke-width="2.2"/></svg>
<svg class="a" style="left:1198px;top:1000px" width="18" height="18"><path d="M3,12 Q8,2 15,3" stroke="#c04030" stroke-width="3" fill="none"/><path d="M2,11 L9,16 L4,17 Z" fill="#e8d0b0"/><path d="M9,12 Q14,16 16,12" stroke="#d02020" stroke-width="3" fill="none"/></svg>
<div class="a" style="left:1223px;top:1002px;font-size:11px;line-height:14px;color:#fff">3:20 PM</div></body></html>
